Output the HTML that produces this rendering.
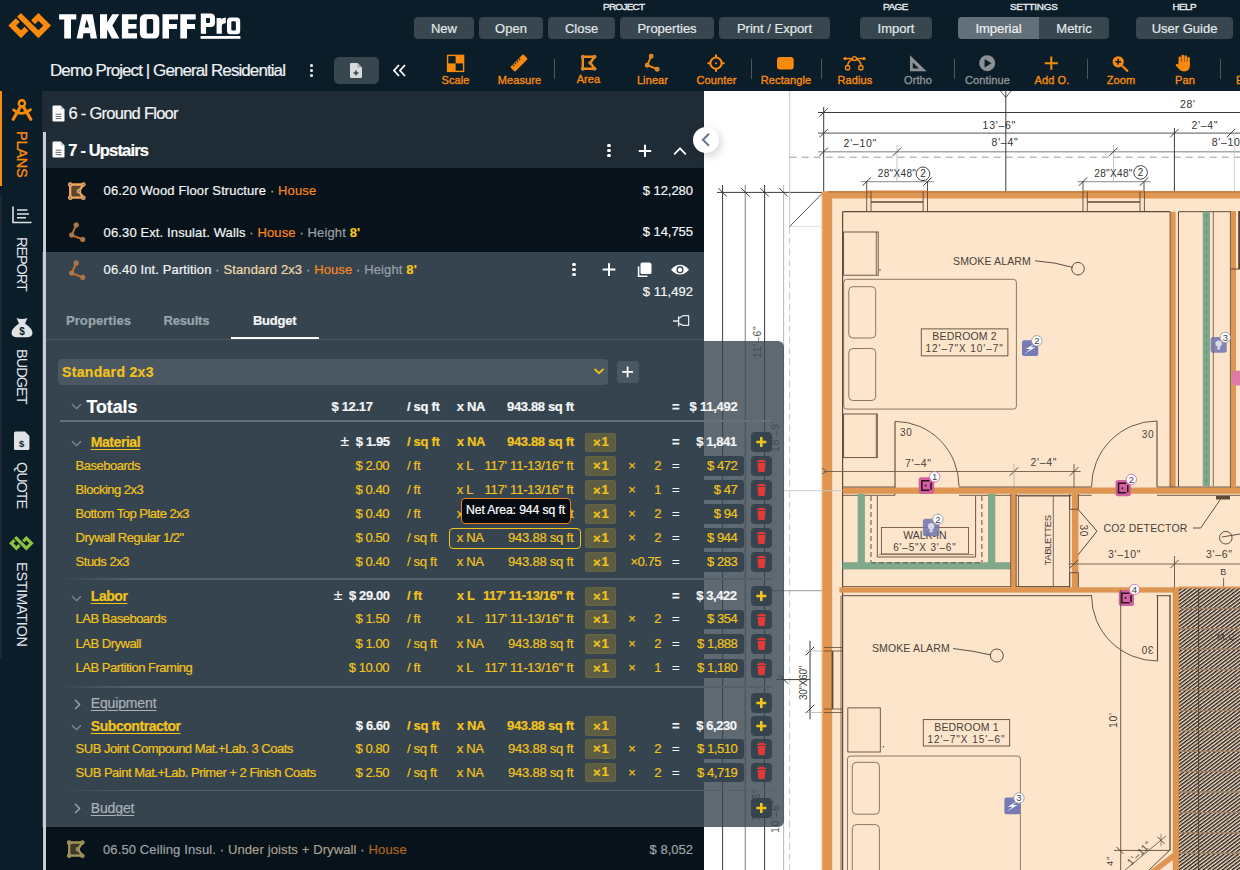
<!DOCTYPE html><html><head><meta charset="utf-8"><style>
*{box-sizing:border-box;margin:0;padding:0}
html,body{width:1240px;height:870px;overflow:hidden;background:#0b1d29;font-family:"Liberation Sans",sans-serif;color:#fff;position:relative}
.a{position:absolute}
.t{position:absolute;line-height:1;white-space:nowrap;-webkit-text-stroke:0.2px currentColor}
.btn{position:absolute;top:17px;height:22px;background:#37464f;border-radius:4px}
.sep{position:absolute;top:59px;width:1px;height:20px;background:#4a5760}
</style></head><body><svg class="a" style="left:704px;top:91px" width="536" height="779" viewBox="704 91 536 779" font-family="Liberation Sans"><rect x="704" y="91" width="536" height="779" fill="#fff"/>
<line x1="722.6" y1="185" x2="722.6" y2="870" stroke="#3b3b3b" stroke-width="1" />
<line x1="718.4" y1="188.20000000000002" x2="726.8000000000001" y2="196.6" stroke="#3b3b3b" stroke-width="1" />
<line x1="745.3" y1="185" x2="745.3" y2="870" stroke="#9d9d9d" stroke-width="1.3" />
<line x1="741.0999999999999" y1="188.20000000000002" x2="749.5" y2="196.6" stroke="#3b3b3b" stroke-width="1" />
<line x1="764.6" y1="185" x2="764.6" y2="870" stroke="#3b3b3b" stroke-width="1" />
<line x1="760.4" y1="188.20000000000002" x2="768.8000000000001" y2="196.6" stroke="#3b3b3b" stroke-width="1" />
<line x1="783.6" y1="185" x2="783.6" y2="870" stroke="#b0b0b0" stroke-width="0.9" />
<line x1="779.4" y1="188.20000000000002" x2="787.8000000000001" y2="196.6" stroke="#3b3b3b" stroke-width="1" />
<line x1="717" y1="192.4" x2="822.6" y2="192.4" stroke="#3b3b3b" stroke-width="1" />
<line x1="789.7" y1="91" x2="789.7" y2="226.5" stroke="#c8c8c8" stroke-width="1" />
<line x1="789.7" y1="226.5" x2="789.7" y2="870" stroke="#c8c8c8" stroke-width="1" stroke-dasharray="7 4"/>
<line x1="789.7" y1="226.5" x2="822.6" y2="193" stroke="#3b3b3b" stroke-width="0.9" />
<line x1="789.7" y1="226.4" x2="822.6" y2="226.4" stroke="#d8d8d8" stroke-width="0.8" />
<text x="0" y="0" font-size="10.5" fill="#555" letter-spacing="0.7" transform="translate(760.8 358) rotate(-90)">11'–6"</text>
<text x="0" y="0" font-size="10.5" fill="#777" letter-spacing="0.7" transform="translate(779 452) rotate(-90)">18'–9"</text>
<text x="0" y="0" font-size="10.5" fill="#666" letter-spacing="0.7" transform="translate(759.5 821) rotate(-90)">11'–6"</text>
<text x="0" y="0" font-size="10.5" fill="#555" letter-spacing="0.7" transform="translate(778.5 833) rotate(-90)">10'–6"</text>
<line x1="769" y1="590.7" x2="822.6" y2="590.7" stroke="#9a9a9a" stroke-width="1" />
<line x1="776.5" y1="679.6" x2="810" y2="679.6" stroke="#3b3b3b" stroke-width="1" />
<line x1="779.6999999999999" y1="675.4" x2="788.1" y2="683.8000000000001" stroke="#3b3b3b" stroke-width="1" />
<line x1="810" y1="640.8" x2="810" y2="719.4" stroke="#3b3b3b" stroke-width="1" />
<line x1="805.8" y1="655.2" x2="814.2" y2="646.8" stroke="#3b3b3b" stroke-width="1" />
<line x1="805.8" y1="713.2" x2="814.2" y2="704.8" stroke="#3b3b3b" stroke-width="1" />
<line x1="804.8" y1="651" x2="822.6" y2="651" stroke="#b0b0b0" stroke-width="0.8" />
<line x1="804.8" y1="712.5" x2="822.6" y2="712.5" stroke="#b0b0b0" stroke-width="0.8" />
<text x="0" y="0" font-size="10" fill="#444" letter-spacing="-0.3" transform="translate(807 700) rotate(-90)">30"X60"</text>
<line x1="818" y1="112.5" x2="1240" y2="112.5" stroke="#3b3b3b" stroke-width="1" />
<line x1="818" y1="133.1" x2="1240" y2="133.1" stroke="#555" stroke-width="1" />
<line x1="818" y1="151.7" x2="1240" y2="151.7" stroke="#a8a8a8" stroke-width="1.6" />
<line x1="789.7" y1="157.2" x2="1240" y2="157.2" stroke="#9a9a9a" stroke-width="1" stroke-dasharray="7 5"/>
<line x1="823.7" y1="107" x2="823.7" y2="193" stroke="#3b3b3b" stroke-width="1" />
<line x1="819.5" y1="116.7" x2="827.9000000000001" y2="108.3" stroke="#3b3b3b" stroke-width="1" />
<line x1="819.5" y1="137.29999999999998" x2="827.9000000000001" y2="128.9" stroke="#3b3b3b" stroke-width="1" />
<line x1="819.5" y1="155.89999999999998" x2="827.9000000000001" y2="147.5" stroke="#3b3b3b" stroke-width="1" />
<line x1="1005.8" y1="91" x2="1005.8" y2="191" stroke="#3b3b3b" stroke-width="1" />
<path d="M1000.5 91 L1005.8 97.5 L1011.1 91" fill="none" stroke="#444" stroke-width="0.9"/>
<line x1="1174.4" y1="128" x2="1174.4" y2="216" stroke="#3b3b3b" stroke-width="1" />
<line x1="1170.2" y1="137.29999999999998" x2="1178.6000000000001" y2="128.9" stroke="#3b3b3b" stroke-width="1" />
<line x1="1226.8" y1="137.29999999999998" x2="1235.2" y2="128.9" stroke="#3b3b3b" stroke-width="1" />
<line x1="897" y1="145" x2="897" y2="181.6" stroke="#b8b8b8" stroke-width="0.8" />
<line x1="892.8" y1="155.89999999999998" x2="901.2" y2="147.5" stroke="#3b3b3b" stroke-width="1" />
<line x1="1113.5" y1="145" x2="1113.5" y2="181.6" stroke="#b8b8b8" stroke-width="0.8" />
<line x1="1109.3" y1="155.89999999999998" x2="1117.7" y2="147.5" stroke="#3b3b3b" stroke-width="1" />
<line x1="1234.3" y1="133" x2="1234.3" y2="211" stroke="#c8c8c8" stroke-width="0.8" />
<text x="1180" y="107.65" font-size="10.5" fill="#333" text-anchor="start" letter-spacing="0.7">28'</text>
<text x="982.6" y="128.65" font-size="10.5" fill="#333" text-anchor="start" letter-spacing="0.7">13'–6"</text>
<text x="1191.4" y="128.65" font-size="10.5" fill="#333" text-anchor="start" letter-spacing="0.7">2'–4"</text>
<text x="843.6" y="146.65" font-size="10.5" fill="#333" text-anchor="start" letter-spacing="0.7">2'–10"</text>
<text x="991.6" y="146.05" font-size="10.5" fill="#333" text-anchor="start" letter-spacing="0.7">8'–4"</text>
<text x="1211.7" y="146.05" font-size="10.5" fill="#333" text-anchor="start" letter-spacing="0.7">8'–10"</text>
<text x="877.8" y="176.70" font-size="10" fill="#333" text-anchor="start" letter-spacing="0.35">28"X48"</text>
<circle cx="923" cy="173.8" r="6.8" fill="none" stroke="#333" stroke-width="0.9"/>
<text x="923" y="177.4" font-size="10" fill="#333" text-anchor="middle">2</text>
<text x="1094.3" y="176.70" font-size="10" fill="#333" text-anchor="start" letter-spacing="0.35">28"X48"</text>
<circle cx="1140.6" cy="172.4" r="6.8" fill="none" stroke="#333" stroke-width="0.9"/>
<text x="1140.6" y="176.0" font-size="10" fill="#333" text-anchor="middle">2</text>
<line x1="860.8" y1="181.6" x2="933.8" y2="181.6" stroke="#a0a0a0" stroke-width="1.4" />
<line x1="862.5" y1="185.79999999999998" x2="870.9000000000001" y2="177.4" stroke="#3b3b3b" stroke-width="1" />
<line x1="923.3" y1="185.79999999999998" x2="931.7" y2="177.4" stroke="#3b3b3b" stroke-width="1" />
<line x1="1077.4" y1="181.6" x2="1150.7" y2="181.6" stroke="#a0a0a0" stroke-width="1.4" />
<line x1="1078.8" y1="185.79999999999998" x2="1087.2" y2="177.4" stroke="#3b3b3b" stroke-width="1" />
<line x1="1139.8" y1="185.79999999999998" x2="1148.2" y2="177.4" stroke="#3b3b3b" stroke-width="1" />
<line x1="866.7" y1="181.6" x2="866.7" y2="191" stroke="#3b3b3b" stroke-width="0.9" />
<line x1="927.5" y1="181.6" x2="927.5" y2="191" stroke="#3b3b3b" stroke-width="0.9" />
<line x1="1083" y1="181.6" x2="1083" y2="191" stroke="#3b3b3b" stroke-width="0.9" />
<line x1="1144" y1="181.6" x2="1144" y2="191" stroke="#3b3b3b" stroke-width="0.9" />
<rect x="822.6" y="191.5" width="417.4" height="678.5" fill="#fde5cc"/>
<rect x="822.6" y="191.5" width="417.4" height="7.0" fill="#de9652"/>
<rect x="822.6" y="191.5" width="9.600000000000023" height="678.5" fill="#de9652"/>
<line x1="828" y1="191.8" x2="1240" y2="191.8" stroke="#b8722c" stroke-width="1.2" />
<line x1="822.3" y1="192" x2="822.3" y2="870" stroke="#f4a65a" stroke-width="1.3" />
<rect x="866.7" y="198.7" width="60.799999999999955" height="13.0" fill="#fde5cc"/>
<line x1="866.7" y1="191" x2="866.7" y2="211.7" stroke="#5e4836" stroke-width="0.9" />
<line x1="871.0" y1="191" x2="871.0" y2="211.7" stroke="#5e4836" stroke-width="0.9" />
<line x1="923.1" y1="191" x2="923.1" y2="211.7" stroke="#5e4836" stroke-width="0.9" />
<line x1="927.5" y1="191" x2="927.5" y2="211.7" stroke="#5e4836" stroke-width="0.9" />
<line x1="871.0" y1="202" x2="923.1" y2="202" stroke="#5e4836" stroke-width="1.6" />
<rect x="1083" y="198.7" width="61.40000000000009" height="13.0" fill="#fde5cc"/>
<line x1="1083" y1="191" x2="1083" y2="211.7" stroke="#5e4836" stroke-width="0.9" />
<line x1="1087.3" y1="191" x2="1087.3" y2="211.7" stroke="#5e4836" stroke-width="0.9" />
<line x1="1140.0" y1="191" x2="1140.0" y2="211.7" stroke="#5e4836" stroke-width="0.9" />
<line x1="1144.4" y1="191" x2="1144.4" y2="211.7" stroke="#5e4836" stroke-width="0.9" />
<line x1="1087.3" y1="202" x2="1140.0" y2="202" stroke="#5e4836" stroke-width="1.6" />
<line x1="866.7" y1="191" x2="927.5" y2="191" stroke="#cf8137" stroke-width="1" />
<line x1="1083" y1="191" x2="1144.4" y2="191" stroke="#cf8137" stroke-width="1" />
<rect x="832.5" y="647" width="10.100000000000023" height="66" fill="#fde5cc"/>
<line x1="823.7" y1="647.5" x2="842.6" y2="647.5" stroke="#5e4836" stroke-width="0.8" />
<line x1="823.7" y1="651" x2="842.6" y2="651" stroke="#5e4836" stroke-width="0.8" />
<line x1="823.7" y1="709" x2="842.6" y2="709" stroke="#5e4836" stroke-width="0.8" />
<line x1="823.7" y1="712.5" x2="842.6" y2="712.5" stroke="#5e4836" stroke-width="0.8" />
<line x1="832.5" y1="651" x2="832.5" y2="709" stroke="#5e4836" stroke-width="1.8" />
<line x1="842.6" y1="211.7" x2="1170" y2="211.7" stroke="#5e4836" stroke-width="1.2" />
<line x1="842.6" y1="211.7" x2="842.6" y2="870" stroke="#5e4836" stroke-width="1.2" />
<rect x="1170" y="211.7" width="5.599999999999909" height="275.8" fill="#de9652"/>
<line x1="1170" y1="211.7" x2="1170" y2="487" stroke="#5e4836" stroke-width="0.8" />
<rect x="843.6" y="232" width="34.60000000000002" height="43.19999999999999" rx="0" fill="none" stroke="#5e4836" stroke-width="0.9"/>
<line x1="876.3" y1="232" x2="876.3" y2="275.2" stroke="#5e4836" stroke-width="0.8" />
<circle cx="880" cy="270" r="0.8" fill="#5e4836"/>
<rect x="843.7" y="279.3" width="172.69999999999993" height="129.8" rx="3" fill="none" stroke="#6e5a48" stroke-width="0.8"/>
<rect x="848.8" y="286.7" width="26.90000000000009" height="51.30000000000001" rx="4" fill="none" stroke="#6e5a48" stroke-width="0.8"/>
<rect x="848.8" y="348.5" width="26.90000000000009" height="52.0" rx="4" fill="none" stroke="#6e5a48" stroke-width="0.8"/>
<rect x="843.6" y="414" width="33.69999999999993" height="43.60000000000002" rx="0" fill="none" stroke="#5e4836" stroke-width="0.9"/>
<line x1="876.3" y1="414" x2="876.3" y2="457.6" stroke="#5e4836" stroke-width="0.8" />
<rect x="921.3" y="328.9" width="86.60000000000002" height="27.0" rx="0" fill="none" stroke="#5e4836" stroke-width="0.9"/>
<text x="964.6" y="340.44" font-size="10.5" fill="#4a4038" text-anchor="middle" letter-spacing="0.17">BEDROOM 2</text>
<text x="964.6" y="352.40" font-size="10" fill="#4a4038" text-anchor="middle" letter-spacing="0.95">12'–7"X  10'–7"</text>
<text x="953" y="265.14" font-size="10.5" fill="#4a4038" text-anchor="start" letter-spacing="0.14">SMOKE ALARM</text>
<path d="M1035 260.8 Q1055 262 1073 267.5" fill="none" stroke="#4a4038" stroke-width="0.9"/>
<circle cx="1078" cy="268.7" r="6.3" fill="none" stroke="#4a4038" stroke-width="0.9"/>
<rect x="1022" y="340.3" width="16.299999999999955" height="15.699999999999989" rx="2" fill="#777bb4"/>
<path d="M1036.15 342.65 L1025.65 348.95 H1030.3500000000001 L1024.15 354.15 L1035.15 347.34999999999997 H1030.45 Z" fill="#fff"/>
<circle cx="1036.8" cy="340.8" r="5.2" fill="#fff" stroke="#9a9aa6" stroke-width="0.9"/>
<text x="1036.8" y="344.2" font-size="9.5" fill="#444" text-anchor="middle">2</text>
<path d="M895 421.4 A64 65 0 0 1 959 486.4" fill="none" stroke="#5e4836" stroke-width="0.9"/>
<line x1="895" y1="421.4" x2="895" y2="495" stroke="#5e4836" stroke-width="1.1" />
<text x="900" y="435.50" font-size="10" fill="#4a4038" text-anchor="start" letter-spacing="0.7">30</text>
<path d="M1091.5 487 A65.5 66 0 0 1 1157 421" fill="none" stroke="#5e4836" stroke-width="0.9"/>
<line x1="1157" y1="421" x2="1157" y2="487" stroke="#5e4836" stroke-width="1.1" />
<text x="1141.7" y="437.60" font-size="10" fill="#4a4038" text-anchor="start" letter-spacing="0.7">30</text>
<line x1="824" y1="471.5" x2="1080.6" y2="471.5" stroke="#6e5a48" stroke-width="0.9" />
<line x1="1009.8" y1="475.7" x2="1018.2" y2="467.3" stroke="#5e4836" stroke-width="1" />
<line x1="1069.8" y1="475.7" x2="1078.2" y2="467.3" stroke="#5e4836" stroke-width="1" />
<path d="M822 468 L827 471.5 L822 474" fill="none" stroke="#555" stroke-width="0.8"/>
<line x1="1074" y1="464" x2="1074" y2="494" stroke="#5e4836" stroke-width="0.8" />
<line x1="1014" y1="464" x2="1014" y2="494" stroke="#b09a88" stroke-width="0.6" />
<text x="905" y="466.94" font-size="10.5" fill="#4a4038" text-anchor="start" letter-spacing="0.7">7'–4"</text>
<text x="1030.4" y="466.25" font-size="10.5" fill="#4a4038" text-anchor="start" letter-spacing="0.7">2'–4"</text>
<line x1="783" y1="490.7" x2="843" y2="490.7" stroke="#c8c8c8" stroke-width="0.9" />
<rect x="843" y="487.5" width="397" height="6.300000000000011" fill="#de9652"/>
<line x1="843" y1="487" x2="895" y2="487" stroke="#5e4836" stroke-width="0.9" />
<line x1="843" y1="495.3" x2="895" y2="495.3" stroke="#5e4836" stroke-width="0.9" />
<line x1="959" y1="487" x2="1091.5" y2="487" stroke="#5e4836" stroke-width="0.9" />
<line x1="959" y1="495.3" x2="1091.5" y2="495.3" stroke="#5e4836" stroke-width="0.9" />
<line x1="1157" y1="487" x2="1240" y2="487" stroke="#5e4836" stroke-width="0.9" />
<line x1="1157" y1="495.3" x2="1240" y2="495.3" stroke="#5e4836" stroke-width="0.9" />
<rect x="918.7" y="477.3" width="15.5" height="16.5" rx="2.5" fill="#cf5a9c" opacity="0.95"/>
<path d="M929.45 480.75 H921.85 V490.35 H929.45 M931.0500000000001 482.55 V489.75" fill="none" stroke="#2a1020" stroke-width="1.5"/><circle cx="925.6500000000001" cy="485.55" r="0.9" fill="#2a1020"/>
<circle cx="934.7" cy="476.8" r="5.2" fill="#fff" stroke="#d070a8" stroke-width="0.9"/>
<text x="934.7" y="480.2" font-size="9.5" fill="#444" text-anchor="middle">1</text>
<rect x="1115.5" y="479.9" width="15.299999999999955" height="16.30000000000001" rx="2.5" fill="#cf5a9c" opacity="0.95"/>
<path d="M1126.15 483.24999999999994 H1118.5500000000002 V492.84999999999997 H1126.15 M1127.75 485.04999999999995 V492.24999999999994" fill="none" stroke="#2a1020" stroke-width="1.5"/><circle cx="1122.3500000000001" cy="488.04999999999995" r="0.9" fill="#2a1020"/>
<circle cx="1131.3" cy="479.4" r="5.2" fill="#fff" stroke="#d070a8" stroke-width="0.9"/>
<text x="1131.3" y="482.79999999999995" font-size="9.5" fill="#444" text-anchor="middle">2</text>
<rect x="857.6" y="493.8" width="7.2999999999999545" height="71.49999999999994" fill="#80a98b"/>
<rect x="988" y="493.8" width="7.2999999999999545" height="71.49999999999994" fill="#80a98b"/>
<rect x="842.6" y="562.2" width="168.10000000000002" height="7.199999999999932" fill="#80a98b"/>
<line x1="871" y1="496" x2="871" y2="562" stroke="#4a4038" stroke-width="0.9" stroke-dasharray="5 3"/>
<line x1="981.9" y1="496" x2="981.9" y2="562" stroke="#4a4038" stroke-width="0.9" stroke-dasharray="5 3"/>
<line x1="871" y1="562.8" x2="981.9" y2="562.8" stroke="#4a4038" stroke-width="0.8" stroke-dasharray="5 3"/>
<line x1="877.3" y1="496" x2="877.3" y2="557" stroke="#5e4836" stroke-width="0.9" />
<line x1="975.6" y1="496" x2="975.6" y2="557" stroke="#5e4836" stroke-width="0.9" />
<line x1="877.3" y1="557" x2="975.6" y2="557" stroke="#5e4836" stroke-width="0.9" />
<line x1="879" y1="554.6" x2="974" y2="554.6" stroke="#5e4836" stroke-width="0.6" />
<rect x="881.4" y="527.6" width="87.0" height="26.299999999999955" rx="0" fill="none" stroke="#5e4836" stroke-width="0.8"/>
<text x="924.9" y="539.25" font-size="10.5" fill="#4a4038" text-anchor="middle" letter-spacing="0">WALK-IN</text>
<text x="924.9" y="551.20" font-size="10" fill="#4a4038" text-anchor="middle" letter-spacing="0.8">6'–5"X  3'–6"</text>
<rect x="922.9" y="518.7" width="16.5" height="17.59999999999991" rx="2.5" fill="#6f74ad" opacity="0.85"/>
<circle cx="931.15" cy="526.3" r="3.2" fill="#e8e8f0" opacity="0.85"/><rect x="929.75" y="529.3" width="2.8" height="3" fill="#e8e8f0" opacity="0.85"/>
<circle cx="937.9" cy="519.2" r="5.2" fill="#fff" stroke="#9a9aa6" stroke-width="0.9"/>
<text x="937.9" y="522.6" font-size="9.5" fill="#444" text-anchor="middle">2</text>
<rect x="1010.7" y="494" width="5.5" height="94" fill="#de9652"/>
<line x1="1010.7" y1="494" x2="1010.7" y2="588" stroke="#5e4836" stroke-width="0.8" />
<line x1="1016.2" y1="494" x2="1016.2" y2="588" stroke="#5e4836" stroke-width="0.8" />
<rect x="1018.4" y="496" width="51.30000000000007" height="91" rx="0" fill="none" stroke="#5e4836" stroke-width="0.9"/>
<line x1="1053.3" y1="496" x2="1053.3" y2="587" stroke="#5e4836" stroke-width="0.8" />
<text x="0" y="0" font-size="9.5" fill="#4a4038" letter-spacing="-0.4" transform="translate(1051 565.5) rotate(-90)">TABLETTES</text>
<rect x="1071.9" y="494" width="6.5" height="94" fill="#de9652"/>
<line x1="1069.7" y1="494" x2="1069.7" y2="509.3" stroke="#5e4836" stroke-width="0.9" />
<line x1="1069.7" y1="509.3" x2="1078.4" y2="509.3" stroke="#5e4836" stroke-width="0.9" />
<line x1="1069.7" y1="572.7" x2="1078.4" y2="572.7" stroke="#5e4836" stroke-width="0.9" />
<line x1="1069.7" y1="572.7" x2="1069.7" y2="588" stroke="#5e4836" stroke-width="0.9" />
<line x1="1078.4" y1="494" x2="1078.4" y2="509.3" stroke="#5e4836" stroke-width="0.9" />
<line x1="1078.4" y1="572.7" x2="1078.4" y2="588" stroke="#5e4836" stroke-width="0.9" />
<path d="M1078 509.3 L1097 531.2 L1078 555" fill="none" stroke="#5e4836" stroke-width="1"/>
<text x="0" y="0" font-size="10" fill="#4a4038" letter-spacing="0.7" transform="translate(1080 524.6) rotate(90)">30</text>
<text x="1103.5" y="531.85" font-size="10.5" fill="#4a4038" text-anchor="start" letter-spacing="0.16">CO2 DETECTOR</text>
<rect x="1216" y="496" width="14" height="3.5" fill="#5e4836"/>
<path d="M1193 528 H1200.7 L1220.3 499.5" fill="none" stroke="#4a4038" stroke-width="0.9"/>
<circle cx="1225.8" cy="537.7" r="6.3" fill="none" stroke="#4a4038" stroke-width="0.9"/>
<line x1="1222" y1="537" x2="1240" y2="534" stroke="#4a4038" stroke-width="0.9" />
<text x="1108" y="558.04" font-size="10.5" fill="#4a4038" text-anchor="start" letter-spacing="0.7">3'–10"</text>
<text x="1206" y="558.04" font-size="10.5" fill="#4a4038" text-anchor="start" letter-spacing="0.7">3'–6"</text>
<line x1="1068.6" y1="564" x2="1240" y2="564" stroke="#6e5a48" stroke-width="0.9" />
<line x1="1069.8" y1="568.2" x2="1078.2" y2="559.8" stroke="#5e4836" stroke-width="1" />
<line x1="1170.3" y1="568.2" x2="1178.7" y2="559.8" stroke="#5e4836" stroke-width="1" />
<text x="1223.6" y="574.71" font-size="9" fill="#4a4038" text-anchor="middle" letter-spacing="0.7">B</text>
<line x1="1223.6" y1="578" x2="1223.6" y2="625" stroke="#4a4038" stroke-width="0.8" />
<line x1="1174.5" y1="556" x2="1174.5" y2="600" stroke="#4a4038" stroke-width="0.8" />
<line x1="1178.5" y1="211.7" x2="1178.5" y2="487" stroke="#5e4836" stroke-width="1" />
<line x1="1178.5" y1="211.7" x2="1230.2" y2="211.7" stroke="#5e4836" stroke-width="1" />
<rect x="1202.7" y="211.7" width="7.2999999999999545" height="274.3" fill="#80a98b"/>
<line x1="1206.4" y1="214" x2="1206.4" y2="486" stroke="#5f8a6a" stroke-width="0.9" stroke-dasharray="5 3"/>
<line x1="1213.3" y1="211.7" x2="1213.3" y2="486" stroke="#5e4836" stroke-width="0.8" />
<rect x="1230.4" y="211" width="5.599999999999909" height="276.5" fill="#de9652"/>
<line x1="1230.4" y1="211" x2="1230.4" y2="487.5" stroke="#5e4836" stroke-width="0.8" />
<rect x="1238.2" y="211" width="1.7999999999999545" height="58" fill="#5a4030"/>
<line x1="1230.2" y1="269" x2="1240" y2="269" stroke="#5e4836" stroke-width="1" />
<rect x="1210.6" y="336.9" width="16.200000000000045" height="15.800000000000011" rx="2.5" fill="#6f74ad" opacity="0.85"/>
<circle cx="1218.6999999999998" cy="343.59999999999997" r="3.2" fill="#e8e8f0" opacity="0.85"/><rect x="1217.2999999999997" y="346.59999999999997" width="2.8" height="3" fill="#e8e8f0" opacity="0.85"/>
<circle cx="1225.3" cy="337.4" r="5.2" fill="#fff" stroke="#9a9aa6" stroke-width="0.9"/>
<text x="1225.3" y="340.79999999999995" font-size="9.5" fill="#444" text-anchor="middle">3</text>
<rect x="1232" y="370.8" width="10" height="14.6" rx="2" fill="#e07aa6"/>
<rect x="839.4" y="587.3" width="335.1" height="5.300000000000068" fill="#de9652"/>
<line x1="842.6" y1="595.7" x2="1092" y2="595.7" stroke="#5e4836" stroke-width="1" />
<line x1="1156.4" y1="595.7" x2="1171" y2="595.7" stroke="#5e4836" stroke-width="1" />
<line x1="843" y1="586.5" x2="1010.7" y2="586.5" stroke="#5e4836" stroke-width="0.8" />
<line x1="1016.2" y1="586.5" x2="1069.7" y2="586.5" stroke="#5e4836" stroke-width="0.8" />
<rect x="1118.8" y="590" width="15.200000000000045" height="16" rx="2.5" fill="#cf5a9c" opacity="0.95"/>
<path d="M1129.4 593.2 H1121.8000000000002 V602.8 H1129.4 M1131.0 595.0 V602.2" fill="none" stroke="#2a1020" stroke-width="1.5"/><circle cx="1125.6000000000001" cy="598.0" r="0.9" fill="#2a1020"/>
<circle cx="1134.5" cy="589.5" r="5.2" fill="#fff" stroke="#d070a8" stroke-width="0.9"/>
<text x="1134.5" y="592.9" font-size="9.5" fill="#444" text-anchor="middle">4</text>
<line x1="841" y1="595.7" x2="841" y2="870" stroke="#5e4836" stroke-width="0.8" />
<text x="871.9" y="652.25" font-size="10.5" fill="#4a4038" text-anchor="start" letter-spacing="0.14">SMOKE ALARM</text>
<path d="M953 648.5 Q975 651 991 655" fill="none" stroke="#4a4038" stroke-width="0.9"/>
<circle cx="996.8" cy="655.5" r="6.5" fill="none" stroke="#4a4038" stroke-width="0.9"/>
<rect x="847.8" y="707.9" width="32.5" height="44.10000000000002" rx="0" fill="none" stroke="#5e4836" stroke-width="0.9"/>
<circle cx="883.4" cy="746.7" r="0.8" fill="#5e4836"/>
<rect x="923.3" y="719.6" width="86.40000000000009" height="26.399999999999977" rx="0" fill="none" stroke="#5e4836" stroke-width="0.9"/>
<text x="966.5" y="731.04" font-size="10.5" fill="#4a4038" text-anchor="middle" letter-spacing="0.17">BEDROOM 1</text>
<text x="966.5" y="742.90" font-size="10" fill="#4a4038" text-anchor="middle" letter-spacing="0.95">12'–7"X  15'–6"</text>
<rect x="847.5" y="756" width="172.89999999999998" height="124" rx="3" fill="none" stroke="#6e5a48" stroke-width="0.8"/>
<rect x="852.3" y="762.3" width="27.100000000000023" height="51.90000000000009" rx="4" fill="none" stroke="#6e5a48" stroke-width="0.8"/>
<rect x="852.3" y="824.6" width="27.100000000000023" height="55.39999999999998" rx="4" fill="none" stroke="#6e5a48" stroke-width="0.8"/>
<rect x="1004.4" y="797.5" width="16.0" height="16.700000000000045" rx="2" fill="#777bb4"/>
<path d="M1018.4 800.35 L1007.9 806.65 H1012.6 L1006.4 811.85 L1017.4 805.0500000000001 H1012.6999999999999 Z" fill="#fff"/>
<circle cx="1018.9" cy="798.0" r="5.2" fill="#fff" stroke="#9a9aa6" stroke-width="0.9"/>
<text x="1018.9" y="801.4" font-size="9.5" fill="#444" text-anchor="middle">3</text>
<path d="M1091.5 595.5 A66 65.5 0 0 0 1157.5 661" fill="none" stroke="#5e4836" stroke-width="0.9"/>
<line x1="1157.5" y1="595.7" x2="1157.5" y2="661" stroke="#5e4836" stroke-width="1.1" />
<text x="0" y="0" font-size="10" fill="#4a4038" letter-spacing="0.7" transform="translate(1153.5 646.4) rotate(180)">30</text>
<line x1="1120.7" y1="590" x2="1120.7" y2="870" stroke="#5e4836" stroke-width="0.9" />
<text x="0" y="0" font-size="10.5" fill="#4a4038" letter-spacing="0.7" transform="translate(1116.9 728) rotate(-90)">10'</text>
<line x1="1170" y1="595.7" x2="1170" y2="850.4" stroke="#5e4836" stroke-width="1.3" />
<rect x="1173.3" y="587.3" width="5.7000000000000455" height="282.70000000000005" fill="#de9652"/>
<line x1="1173.3" y1="587.3" x2="1173.3" y2="870" stroke="#cf8137" stroke-width="0.8" />
<line x1="1179" y1="587.3" x2="1179" y2="870" stroke="#cf8137" stroke-width="0.8" />
<line x1="1114" y1="850.4" x2="1169.5" y2="850.4" stroke="#5e4836" stroke-width="0.9" />
<line x1="1116.5" y1="846.9" x2="1123.5" y2="853.9" stroke="#5e4836" stroke-width="1" />
<line x1="1125" y1="870" x2="1166" y2="836" stroke="#5e4836" stroke-width="0.8" />
<line x1="1157.5" y1="836.8" x2="1164.5" y2="843.8" stroke="#5e4836" stroke-width="1" />
<line x1="1161" y1="834" x2="1161" y2="846" stroke="#5e4836" stroke-width="0.6" />
<path d="M1152.5 872 L1175.5 854.5" stroke="#de9652" stroke-width="5.5"/>
<line x1="1149" y1="870" x2="1169.5" y2="850.4" stroke="#5e4836" stroke-width="1" />
<text x="0" y="0" font-size="9.5" fill="#4a4038" letter-spacing="0.7" transform="translate(1131 866) rotate(-45)">1'–11"</text>
<text x="0" y="0" font-size="9.5" fill="#4a4038" letter-spacing="0.7" transform="translate(1113 866) rotate(-90)">4"</text>
<defs><pattern id="hatch" patternUnits="userSpaceOnUse" width="2.9" height="2.9" patternTransform="rotate(53)"><rect width="2.9" height="2.9" fill="#fde5cc"/><rect x="0" y="0" width="1.45" height="2.9" fill="#201c1a"/></pattern></defs>
<rect x="1179" y="587.5" width="61" height="283" fill="url(#hatch)"/>
<line x1="1179" y1="608.4" x2="1240" y2="608.4" stroke="#a08468" stroke-width="1.5" />
<line x1="1179" y1="628.8" x2="1240" y2="628.8" stroke="#a08468" stroke-width="1.5" />
<line x1="1179" y1="649.1999999999999" x2="1240" y2="649.1999999999999" stroke="#a08468" stroke-width="1.5" />
<line x1="1179" y1="669.6" x2="1240" y2="669.6" stroke="#a08468" stroke-width="1.5" />
<line x1="1179" y1="690.0" x2="1240" y2="690.0" stroke="#a08468" stroke-width="1.5" />
<line x1="1179" y1="710.4" x2="1240" y2="710.4" stroke="#a08468" stroke-width="1.5" />
<line x1="1179" y1="730.8" x2="1240" y2="730.8" stroke="#a08468" stroke-width="1.5" />
<line x1="1179" y1="751.1999999999999" x2="1240" y2="751.1999999999999" stroke="#a08468" stroke-width="1.5" />
<line x1="1179" y1="771.5999999999999" x2="1240" y2="771.5999999999999" stroke="#a08468" stroke-width="1.5" />
<line x1="1179" y1="792.0" x2="1240" y2="792.0" stroke="#a08468" stroke-width="1.5" />
<line x1="1179" y1="812.4" x2="1240" y2="812.4" stroke="#a08468" stroke-width="1.5" />
<line x1="1179" y1="832.8" x2="1240" y2="832.8" stroke="#a08468" stroke-width="1.5" />
<line x1="1179" y1="853.1999999999999" x2="1240" y2="853.1999999999999" stroke="#a08468" stroke-width="1.5" />
<line x1="1179" y1="873.5999999999999" x2="1240" y2="873.5999999999999" stroke="#a08468" stroke-width="1.5" />
<line x1="1198.6" y1="587.5" x2="1198.6" y2="870" stroke="#5a4030" stroke-width="1" />
<line x1="1179" y1="587.5" x2="1240" y2="587.5" stroke="#de9652" stroke-width="2" />
<text x="1217" y="640.21" font-size="9" fill="#4a4038" text-anchor="start" letter-spacing="0.7">M.C</text></svg><div class="a" style="left:704px;top:341px;width:80px;height:486px;background:rgba(54,68,79,0.8);border-radius:0 6px 6px 0"></div>
<div class="a" style="left:0;top:0;width:1240px;height:91px;background:#0b1d29"></div>
<svg class="a" style="left:4px;top:8px" width="52" height="36" viewBox="4 8 52 36">
<g fill="none" stroke="#f98a0c" stroke-width="5.5" stroke-linejoin="miter">
<path d="M17.8 20.1 L12.3 25.6 L21 34.3 L26.5 28.8"/>
<path d="M19 14.9 L38.4 34.3 L47.1 25.6 L38.4 16.9 L33.05 22.25"/></g></svg>
<svg class="a" style="left:55px;top:10px" width="190" height="32" viewBox="55 10 190 32"><g fill="#fff" fill-rule="evenodd">
<path d="M59.1 14.2 H76.3 V19.6 H71 V38.5 H64.2 V19.6 H59.1 Z"/>
<path d="M82 14.2 H92.7 L97 38.5 H90.6 L89.9 33.2 H83.5 L82.7 38.5 H76.6 Z M86.8 19.6 L84.6 27.6 H89.1 Z"/>
<path d="M100 14.2 H107.1 V22.6 L112.3 14.2 H119.3 L112.4 25.6 L119.4 38.5 H111.8 L107.1 29.4 V38.5 H100 Z"/>
<path d="M121.9 14.2 H137 V19.4 H128.3 V24.1 H136.4 V28.8 H128.3 V33.3 H137 V38.5 H121.9 Z"/>
<path d="M145.4 14.2 H153.8 Q159.3 14.2 159.3 19.7 V33 Q159.3 38.5 153.8 38.5 H145.4 Q139.9 38.5 139.9 33 V19.7 Q139.9 14.2 145.4 14.2 Z M148.2 19.1 Q146.7 19.1 146.7 20.6 V32 Q146.7 33.5 148.2 33.5 H151.7 Q153.2 33.5 153.2 32 V20.6 Q153.2 19.1 151.7 19.1 Z"/>
<path d="M162.5 14.2 H178 V19.4 H169 V23.9 H177 V29 H169 V38.5 H162.5 Z"/>
<path d="M180.3 14.2 H195.7 V19.4 H187 V23.9 H195 V29 H187 V38.5 H180.3 Z"/>
<path d="M200.8 13.6 H210.5 Q215 13.6 215 18.1 V22.5 Q215 27 210.5 27 H206.1 V33.8 H200.8 Z M206.1 17.9 V22.9 H209 Q210 22.9 210 21.9 V18.9 Q210 17.9 209 17.9 Z"/>
<path d="M216.6 17.9 H221.4 V19.6 Q222.6 17.6 225.8 17.6 V23.3 Q221.8 23.3 221.8 26 V33.8 H216.6 Z"/>
<path d="M230.5 17.5 H236.7 Q240.2 17.5 240.2 21 V30.7 Q240.2 34.2 236.7 34.2 H230.5 Q227 34.2 227 30.7 V21 Q227 17.5 230.5 17.5 Z M232.3 21.3 Q231.3 21.3 231.3 22.3 V29.6 Q231.3 30.6 232.3 30.6 H234.9 Q235.9 30.6 235.9 29.6 V22.3 Q235.9 21.3 234.9 21.3 Z"/>
<rect x="200.6" y="36" width="39.8" height="2.8"/>
</g></svg>
<div class="t" style="top:1.82px;font-size:9.9px;color:#e4e9ec;font-weight:normal;letter-spacing:-0.672px;left:603px;-webkit-text-stroke:0.4px #e4e9ec;">PROJECT</div>
<div class="t" style="top:1.82px;font-size:9.9px;color:#e4e9ec;font-weight:normal;letter-spacing:-0.444px;left:883px;-webkit-text-stroke:0.4px #e4e9ec;">PAGE</div>
<div class="t" style="top:1.82px;font-size:9.9px;color:#e4e9ec;font-weight:normal;letter-spacing:-0.238px;left:1010px;-webkit-text-stroke:0.4px #e4e9ec;">SETTINGS</div>
<div class="t" style="top:1.82px;font-size:9.9px;color:#e4e9ec;font-weight:normal;letter-spacing:-0.616px;left:1172.6px;-webkit-text-stroke:0.4px #e4e9ec;">HELP</div>
<div class="btn" style="left:414px;width:60px"></div>
<div class="t" style="top:21.72px;font-size:13px;color:#e3e8eb;font-weight:normal;left:244.0px;width:400px;text-align:center;">New</div>
<div class="btn" style="left:479px;width:64px"></div>
<div class="t" style="top:21.72px;font-size:13px;color:#e3e8eb;font-weight:normal;left:311.0px;width:400px;text-align:center;">Open</div>
<div class="btn" style="left:548px;width:67px"></div>
<div class="t" style="top:21.72px;font-size:13px;color:#e3e8eb;font-weight:normal;left:381.5px;width:400px;text-align:center;">Close</div>
<div class="btn" style="left:620px;width:94px"></div>
<div class="t" style="top:21.72px;font-size:13px;color:#e3e8eb;font-weight:normal;left:467.0px;width:400px;text-align:center;">Properties</div>
<div class="btn" style="left:719px;width:111px"></div>
<div class="t" style="top:21.72px;font-size:13px;color:#e3e8eb;font-weight:normal;left:574.5px;width:400px;text-align:center;">Print / Export</div>
<div class="btn" style="left:860px;width:72px"></div>
<div class="t" style="top:21.72px;font-size:13px;color:#e3e8eb;font-weight:normal;left:696.0px;width:400px;text-align:center;">Import</div>
<div class="btn" style="left:1136px;width:97px"></div>
<div class="t" style="top:21.72px;font-size:13px;color:#e3e8eb;font-weight:normal;left:984.5px;width:400px;text-align:center;">User Guide</div>
<div class="btn" style="left:958px;width:151px"></div>
<div class="a" style="left:958px;top:17px;width:81px;height:22px;background:#647079;border-radius:4px 0 0 4px"></div>
<div class="t" style="top:21.72px;font-size:13px;color:#eef1f3;font-weight:normal;left:798.5px;width:400px;text-align:center;">Imperial</div>
<div class="t" style="top:21.72px;font-size:13px;color:#e3e8eb;font-weight:normal;left:874px;width:400px;text-align:center;">Metric</div>
<div class="t" style="top:61.88px;font-size:17px;color:#eef1f3;font-weight:normal;letter-spacing:-0.916px;left:50px;">Demo Project | General Residential</div>
<div class="a" style="left:309.5px;top:64.0px;width:3px;height:3px;border-radius:50%;background:#fff"></div>
<div class="a" style="left:309.5px;top:69.0px;width:3px;height:3px;border-radius:50%;background:#fff"></div>
<div class="a" style="left:309.5px;top:74.0px;width:3px;height:3px;border-radius:50%;background:#fff"></div>
<div class="a" style="left:334px;top:57px;width:45px;height:27px;background:#37464f;border-radius:5px"></div>
<svg class="a" style="left:349px;top:62px" width="14" height="17" viewBox="0 0 14 17">
<path d="M2 1 H8.5 L13 5.5 V15 Q13 16 12 16 H2 Q1 16 1 15 V2 Q1 1 2 1Z" fill="#d8dadc"/>
<path d="M8.5 1 V5.5 H13" fill="#a9adb0"/>
<path d="M7 8.5 V13.5 M4.5 11 H9.5" stroke="#37464f" stroke-width="1.6"/></svg>
<svg class="a" style="left:392px;top:64px" width="15" height="13" viewBox="0 0 15 13">
<path d="M7 1 L2 6.5 L7 12 M13 1 L8 6.5 L13 12" fill="none" stroke="#fff" stroke-width="1.8"/></svg>

<svg class="a" style="left:0;top:0" width="1240" height="91" viewBox="0 0 1240 91">
<!-- scale -->
<rect x="447.6" y="55.4" width="16" height="16" fill="none" stroke="#f98a0c" stroke-width="1.4"/>
<rect x="455.6" y="55.4" width="8" height="8" fill="#f98a0c"/><rect x="447.6" y="63.4" width="8" height="8" fill="#f98a0c"/>
<!-- measure ruler -->
<g transform="translate(519,63) rotate(-45)">
<rect x="-9.2" y="-3.4" width="18.4" height="6.8" rx="1.3" fill="#f98a0c"/>
<path d="M-5.5 -3.4 V-1.2 M-2.7 -3.4 V-1.2 M0.1 -3.4 V-1.2 M2.9 -3.4 V-1.2" stroke="#0b1d29" stroke-width="1"/>
</g>
<!-- area -->
<path d="M582.8 56.8 H594.6 L590.3 62.9 L594.6 68.8 H582.8 Z" fill="none" stroke="#f98a0c" stroke-width="2.4" stroke-linejoin="round"/>
<g fill="#8a8f93" stroke="#f98a0c" stroke-width="1"><circle cx="582.8" cy="56.8" r="1.5"/><circle cx="594.6" cy="56.8" r="1.5"/><circle cx="590.3" cy="62.9" r="1.5"/><circle cx="594.6" cy="68.8" r="1.5"/><circle cx="582.8" cy="68.8" r="1.5"/></g>
<!-- linear -->
<path d="M651.2 56.2 L647.2 65.2 L657.2 69.2" fill="none" stroke="#f98a0c" stroke-width="1.8"/>
<g fill="#8a8f93" stroke="#f98a0c" stroke-width="1.3"><circle cx="651.2" cy="56.2" r="1.8"/><circle cx="647.2" cy="65.2" r="1.8"/><circle cx="657.2" cy="69.2" r="1.8"/></g>
<!-- counter -->
<circle cx="716" cy="63.2" r="5.6" fill="none" stroke="#f98a0c" stroke-width="2"/>
<path d="M716 54.6 V58 M716 68.4 V71.8 M707.4 63.2 H710.8 M721.2 63.2 H724.6" stroke="#f98a0c" stroke-width="2"/>
<circle cx="716" cy="63.2" r="1" fill="#f98a0c"/>
<!-- rectangle -->
<rect x="777" y="57" width="16.7" height="12.6" rx="3" fill="#f98a0c"/>
<!-- radius -->
<path d="M845 58.6 H864" stroke="#f98a0c" stroke-width="1.5"/>
<circle cx="845" cy="58.6" r="1.6" fill="#f98a0c"/><circle cx="864" cy="58.6" r="1.6" fill="#f98a0c"/>
<circle cx="854.5" cy="58.6" r="2" fill="#0b1d29" stroke="#f98a0c" stroke-width="1.4"/>
<path d="M852.6 59.5 Q848 61 847.6 65.6 M856.4 59.5 Q861 61 860.9 65.6" fill="none" stroke="#f98a0c" stroke-width="1.5"/>
<rect x="845.6" y="65.8" width="4" height="4" rx="1" fill="none" stroke="#f98a0c" stroke-width="1.4"/>
<rect x="858.9" y="65.8" width="4" height="4" rx="1" fill="none" stroke="#f98a0c" stroke-width="1.4"/>
<!-- ortho -->
<path d="M910 55.3 L926.6 71.2 H910 Z M912.8 62.5 V68.4 H919 Z" fill="#8d9194" fill-rule="evenodd"/>
<!-- continue -->
<circle cx="987.2" cy="63.2" r="8" fill="#8d9194"/><path d="M984.6 59 L991.4 63.2 L984.6 67.4 Z" fill="#0b1d29"/>
<!-- add o -->
<path d="M1051.3 56.6 V69.8 M1044.7 63.2 H1057.9" stroke="#f98a0c" stroke-width="2"/>
<!-- zoom -->
<circle cx="1118.2" cy="61.8" r="5.6" fill="#f98a0c"/>
<path d="M1118.2 58.8 V64.8 M1115.2 61.8 H1121.2" stroke="#0b1d29" stroke-width="1.6"/>
<path d="M1122 65.8 L1128 71.4" stroke="#f98a0c" stroke-width="2.2"/>
<!-- pan -->
<g fill="#f98a0c">
<rect x="1178.6" y="56.6" width="2.5" height="9" rx="1.25"/>
<rect x="1181.5" y="54.8" width="2.5" height="10" rx="1.25"/>
<rect x="1184.4" y="55.2" width="2.5" height="10" rx="1.25"/>
<rect x="1187.3" y="57" width="2.5" height="9" rx="1.25"/>
<path d="M1178.6 62 H1189.8 V66 Q1189.8 71.4 1184 71.4 Q1180.6 71.4 1178.6 68.8 L1175.9 65.6 Q1175.3 64.6 1176.3 64.1 Q1177.4 63.6 1178.6 64.8 Z"/>
</g>
</svg>
<div class="t" style="top:75.24px;font-size:11px;color:#f98a0c;font-weight:normal;left:255.5px;width:400px;text-align:center;-webkit-text-stroke:0.35px #f98a0c;letter-spacing:0.1px;">Scale</div>
<div class="t" style="top:75.24px;font-size:11px;color:#f98a0c;font-weight:normal;left:319.5px;width:400px;text-align:center;-webkit-text-stroke:0.35px #f98a0c;letter-spacing:0.1px;">Measure</div>
<div class="t" style="top:74.24px;font-size:11px;color:#f98a0c;font-weight:normal;left:388.5px;width:400px;text-align:center;-webkit-text-stroke:0.35px #f98a0c;letter-spacing:0.1px;">Area</div>
<div class="t" style="top:75.24px;font-size:11px;color:#f98a0c;font-weight:normal;left:452.5px;width:400px;text-align:center;-webkit-text-stroke:0.35px #f98a0c;letter-spacing:0.1px;">Linear</div>
<div class="t" style="top:75.24px;font-size:11px;color:#f98a0c;font-weight:normal;left:516.5px;width:400px;text-align:center;-webkit-text-stroke:0.35px #f98a0c;letter-spacing:0.1px;">Counter</div>
<div class="t" style="top:75.24px;font-size:11px;color:#f98a0c;font-weight:normal;left:586px;width:400px;text-align:center;-webkit-text-stroke:0.35px #f98a0c;letter-spacing:0.1px;">Rectangle</div>
<div class="t" style="top:75.24px;font-size:11px;color:#f98a0c;font-weight:normal;left:655px;width:400px;text-align:center;-webkit-text-stroke:0.35px #f98a0c;letter-spacing:0.1px;">Radius</div>
<div class="t" style="top:75.24px;font-size:11px;color:#8d9194;font-weight:normal;left:718px;width:400px;text-align:center;-webkit-text-stroke:0.35px #8d9194;letter-spacing:0.1px;">Ortho</div>
<div class="t" style="top:75.24px;font-size:11px;color:#8d9194;font-weight:normal;left:787.5px;width:400px;text-align:center;-webkit-text-stroke:0.35px #8d9194;letter-spacing:0.1px;">Continue</div>
<div class="t" style="top:75.24px;font-size:11px;color:#f98a0c;font-weight:normal;left:852px;width:400px;text-align:center;-webkit-text-stroke:0.35px #f98a0c;letter-spacing:0.1px;">Add O.</div>
<div class="t" style="top:75.24px;font-size:11px;color:#f98a0c;font-weight:normal;left:921px;width:400px;text-align:center;-webkit-text-stroke:0.35px #f98a0c;letter-spacing:0.1px;">Zoom</div>
<div class="t" style="top:75.24px;font-size:11px;color:#f98a0c;font-weight:normal;left:985px;width:400px;text-align:center;-webkit-text-stroke:0.35px #f98a0c;letter-spacing:0.1px;">Pan</div>
<div class="t" style="top:75.24px;font-size:11px;color:#f98a0c;font-weight:normal;left:1236px;-webkit-text-stroke:0.35px #f98a0c;">E</div>
<div class="sep" style="left:553.5px"></div>
<div class="sep" style="left:751.0px"></div>
<div class="sep" style="left:821.0px"></div>
<div class="sep" style="left:954.0px"></div>
<div class="sep" style="left:1087.3px"></div>
<div class="sep" style="left:1220.0px"></div>
<div class="a" style="left:0;top:91px;width:42px;height:779px;background:#0b1d29"></div>
<div class="a" style="left:0;top:91px;width:2px;height:95px;background:#f98a0c"></div>
<div class="a" style="left:0;top:195px;width:1.5px;height:463px;background:#1f2636"></div>
<div class="t" style="left:29.22px;top:131.2px;font-size:14.5px;color:#f98a0c;letter-spacing:-0.250px;-webkit-text-stroke:0.35px #f98a0c;transform:rotate(90deg);transform-origin:0 0">PLANS</div>
<div class="t" style="left:29.22px;top:236.8px;font-size:14.5px;color:#e3e8ec;letter-spacing:-1.077px;-webkit-text-stroke:0;transform:rotate(90deg);transform-origin:0 0">REPORT</div>
<div class="t" style="left:29.22px;top:348.8px;font-size:14.5px;color:#e3e8ec;letter-spacing:-0.987px;-webkit-text-stroke:0;transform:rotate(90deg);transform-origin:0 0">BUDGET</div>
<div class="t" style="left:29.22px;top:462.4px;font-size:14.5px;color:#e3e8ec;letter-spacing:-1.072px;-webkit-text-stroke:0;transform:rotate(90deg);transform-origin:0 0">QUOTE</div>
<div class="t" style="left:29.22px;top:562.4px;font-size:14.5px;color:#e3e8ec;letter-spacing:-0.294px;-webkit-text-stroke:0;transform:rotate(90deg);transform-origin:0 0">ESTIMATION</div>
<svg class="a" style="left:0;top:91px" width="42" height="570" viewBox="0 91 42 570">
<!-- compass -->
<circle cx="21.9" cy="103.4" r="3.1" fill="none" stroke="#f98a0c" stroke-width="2.4"/>
<path d="M20.6 106.5 L13.2 119.2 M23.2 106.5 L30.8 119.2" stroke="#f98a0c" stroke-width="3.2" stroke-linecap="round"/>
<path d="M13.5 109.8 Q21 117 30.6 109.6" fill="none" stroke="#f98a0c" stroke-width="2.6" stroke-linecap="round"/>
<!-- report -->
<path d="M13 206.5 V222.5 H31.5" fill="none" stroke="#dfe3e6" stroke-width="1.6"/>
<path d="M17 210 H27.5 M17 214 H29 M17 217.8 H26" stroke="#dfe3e6" stroke-width="1.6"/>
<!-- money bag -->
<path d="M16.5 318 Q22 320 27.5 318 L25 323.5 Q33 329 32.5 333.5 Q32 337.2 27 337.2 H17 Q12 337.2 11.5 333.5 Q11 329 19 323.5 Z" fill="#e0e3e6"/>
<text x="22" y="334.5" font-size="10" font-weight="bold" text-anchor="middle" fill="#0b1d29" font-family="Liberation Sans">$</text>
<!-- quote doc -->
<path d="M15.5 431.5 H25 L29.4 436 V448.5 Q29.4 450 28 450 H15.5 Q14 450 14 448.5 V433 Q14 431.5 15.5 431.5 Z" fill="#e0e3e6"/>
<text x="21.7" y="446.5" font-size="9.5" font-weight="bold" text-anchor="middle" fill="#0b1d29" font-family="Liberation Sans">$</text>
</svg>
<svg class="a" style="left:9.3px;top:536px" width="24.7" height="14.5" viewBox="8.2 13 42.9 25.2" preserveAspectRatio="none">
<g fill="none" stroke="#8cc63e" stroke-width="5.5">
<path d="M17.8 20.1 L12.3 25.6 L21 34.3 L26.5 28.8"/>
<path d="M19 14.9 L38.4 34.3 L47.1 25.6 L38.4 16.9 L33.05 22.25"/></g></svg>
<div class="a" style="left:42px;top:91px;width:662px;height:41px;background:#1f2c35"></div>
<div class="a" style="left:42px;top:132px;width:662px;height:36px;background:#1f2c35"></div>
<div class="a" style="left:42px;top:168px;width:662px;height:84px;background:#07121a"></div>
<div class="a" style="left:42px;top:252px;width:662px;height:576px;background:#36444f"></div>
<div class="a" style="left:42px;top:827px;width:662px;height:43px;background:#07121a"></div>
<div class="a" style="left:43px;top:132px;width:3px;height:738px;background:#c9cad6"></div>
<svg class="a" style="left:52px;top:105px" width="13" height="17" viewBox="0 0 13 17">
<path d="M1.8 0.5 H8.6 L12.5 4.4 V15.2 Q12.5 16.5 11.2 16.5 H1.8 Q0.5 16.5 0.5 15.2 V1.8 Q0.5 0.5 1.8 0.5Z" fill="#fff"/>
<path d="M8.6 0.5 V4.4 H12.5" fill="#c8cbce"/>
<path d="M3.6 9.2 H9.4 M3.6 11.4 H9.4 M3.6 13.6 H9.4" stroke="#50565e" stroke-width="0.9"/></svg>
<svg class="a" style="left:52px;top:141px" width="13" height="17" viewBox="0 0 13 17">
<path d="M1.8 0.5 H8.6 L12.5 4.4 V15.2 Q12.5 16.5 11.2 16.5 H1.8 Q0.5 16.5 0.5 15.2 V1.8 Q0.5 0.5 1.8 0.5Z" fill="#fff"/>
<path d="M8.6 0.5 V4.4 H12.5" fill="#c8cbce"/>
<path d="M3.6 9.2 H9.4 M3.6 11.4 H9.4 M3.6 13.6 H9.4" stroke="#50565e" stroke-width="0.9"/></svg>
<div class="t" style="top:104.76px;font-size:16.5px;color:#f4f6f7;font-weight:normal;letter-spacing:-0.741px;left:68.6px;">6 - Ground Floor</div>
<div class="t" style="top:141.96px;font-size:16.5px;color:#fff;font-weight:bold;letter-spacing:-0.839px;left:68.3px;">7 - Upstairs</div>
<div class="a" style="left:607.4px;top:144.1px;width:3.2px;height:3.2px;border-radius:50%;background:#fff"></div><div class="a" style="left:607.4px;top:149.1px;width:3.2px;height:3.2px;border-radius:50%;background:#fff"></div><div class="a" style="left:607.4px;top:154.1px;width:3.2px;height:3.2px;border-radius:50%;background:#fff"></div>
<svg class="a" style="left:560px;top:130px" width="140" height="170" viewBox="560 130 140 170">
<path d="M645 144.8 V157 M638.8 150.9 H651.2" stroke="#fff" stroke-width="2"/>
<path d="M674.2 154.4 L680 148.4 L685.8 154.4" fill="none" stroke="#fff" stroke-width="1.8"/>
<path d="M609 263.2 V276 M602.6 269.6 H615.4" stroke="#fff" stroke-width="2"/>
<!-- copy -->
<path d="M642 262.5 H649 Q651.5 262.5 651.5 265 V272.5 Q651.5 274 650 274 H642 Q640.5 274 640.5 272.5 V264 Q640.5 262.5 642 262.5Z" fill="#fff"/>
<path d="M638.6 266.5 V276.2 H647.5" fill="none" stroke="#fff" stroke-width="1.6"/>
<!-- eye -->
<path d="M671 269.7 Q680 260 689 269.7 Q680 279.4 671 269.7Z" fill="#fff"/>
<circle cx="680" cy="269.7" r="3.6" fill="#36444f"/><circle cx="680" cy="269.7" r="2.2" fill="#fff"/>
</svg>
<div class="a" style="left:572.4px;top:263.09999999999997px;width:3.2px;height:3.2px;border-radius:50%;background:#fff"></div><div class="a" style="left:572.4px;top:268.09999999999997px;width:3.2px;height:3.2px;border-radius:50%;background:#fff"></div><div class="a" style="left:572.4px;top:273.09999999999997px;width:3.2px;height:3.2px;border-radius:50%;background:#fff"></div>
<svg class="a" style="left:67px;top:180.5px" width="20" height="20" viewBox="0 0 20 20">
<path d="M3.2 3.5 H16.4 L11.9 10.3 L16.4 16.7 H3.2 Z" fill="#5a4633" stroke="#f5a556" stroke-width="2.3" stroke-linejoin="round"/>
<g fill="#7d8590" stroke="#f5a556" stroke-width="1.2"><circle cx="3.2" cy="3.5" r="1.7"/><circle cx="16.4" cy="3.5" r="1.7"/><circle cx="11.9" cy="10.3" r="1.7"/><circle cx="16.4" cy="16.7" r="1.7"/><circle cx="3.2" cy="16.7" r="1.7"/></g></svg>
<svg class="a" style="left:67px;top:222.3px" width="20" height="20" viewBox="0 0 20 20">
<path d="M9.2 2.9 L4.7 13.1 L15.7 17.4" fill="none" stroke="#c0702a" stroke-width="2"/>
<g fill="#7d8590" stroke="#c0702a" stroke-width="1.3"><circle cx="9.2" cy="2.9" r="2"/><circle cx="4.7" cy="13.1" r="2"/><circle cx="15.7" cy="17.4" r="2"/></g></svg>
<svg class="a" style="left:67px;top:259.5px" width="20" height="20" viewBox="0 0 20 20">
<path d="M9.2 2.9 L4.7 13.1 L15.7 17.4" fill="none" stroke="#c0702a" stroke-width="2"/>
<g fill="#7d8590" stroke="#c0702a" stroke-width="1.3"><circle cx="9.2" cy="2.9" r="2"/><circle cx="4.7" cy="13.1" r="2"/><circle cx="15.7" cy="17.4" r="2"/></g></svg>
<svg class="a" style="left:66px;top:838.5px" width="20" height="20" viewBox="0 0 20 20">
<path d="M3.2 3.5 H16.4 L11.9 10.3 L16.4 16.7 H3.2 Z" fill="#3c3b2c" stroke="#a39452" stroke-width="2.3" stroke-linejoin="round"/>
<g fill="#7d8590" stroke="#a39452" stroke-width="1.2"><circle cx="3.2" cy="3.5" r="1.7"/><circle cx="16.4" cy="3.5" r="1.7"/><circle cx="11.9" cy="10.3" r="1.7"/><circle cx="16.4" cy="16.7" r="1.7"/><circle cx="3.2" cy="16.7" r="1.7"/></g></svg>
<div class="t" style="left:103.6px;top:183.6px;font-size:13px;letter-spacing:0.12px"><span style="color:#f3f5f6;">06.20 Wood Floor Structure</span><span style="color:#a9b0b5;"> · </span><span style="color:#f7881f;">House</span></div>
<div class="t" style="left:103.6px;top:226.3px;font-size:13px;letter-spacing:0.12px"><span style="color:#f3f5f6;">06.30 Ext. Insulat. Walls</span><span style="color:#a9b0b5;"> · </span><span style="color:#f7881f;">House</span><span style="color:#a9b0b5;"> · </span><span style="color:#9aa1a7;">Height </span><span style="color:#f5c518;font-weight:bold;">8'</span></div>
<div class="t" style="left:103.6px;top:263.29999999999995px;font-size:13px;letter-spacing:0.12px"><span style="color:#f3f5f6;">06.40 Int. Partition</span><span style="color:#a9b0b5;"> · </span><span style="color:#f0d9a8;">Standard 2x3</span><span style="color:#a9b0b5;"> · </span><span style="color:#f7881f;">House</span><span style="color:#a9b0b5;"> · </span><span style="color:#9aa1a7;">Height </span><span style="color:#f5c518;font-weight:bold;">8'</span></div>
<div class="t" style="left:103px;top:842.9px;font-size:13px;letter-spacing:0.12px"><span style="color:#9ea3a7;">06.50 Ceiling Insul.</span><span style="color:#a9b0b5;"> · </span><span style="color:#a79f8f;">Under joists + Drywall</span><span style="color:#a9b0b5;"> · </span><span style="color:#b0661f;">House</span></div>
<div class="t" style="top:183.92px;font-size:13px;color:#f3f5f6;font-weight:normal;letter-spacing:-0.051px;right:547px;margin-right:0.05px;">$ 12,280</div>
<div class="t" style="top:225.22px;font-size:13px;color:#f3f5f6;font-weight:normal;letter-spacing:-0.051px;right:547px;margin-right:0.05px;">$ 14,755</div>
<div class="t" style="top:284.92px;font-size:13px;color:#f3f5f6;font-weight:normal;letter-spacing:0.07px;right:547px;margin-right:-0.07px;">$ 11,492</div>
<div class="t" style="top:842.92px;font-size:13px;color:#9ea3a7;font-weight:normal;letter-spacing:0.018px;right:547px;margin-right:-0.02px;">$ 8,052</div>
<div class="t" style="top:314.42px;font-size:13px;color:#9ba4ab;font-weight:bold;letter-spacing:0.07px;left:66px;">Properties</div>
<div class="t" style="top:314.42px;font-size:13px;color:#9ba4ab;font-weight:bold;letter-spacing:-0.137px;left:163.4px;">Results</div>
<div class="t" style="top:314.42px;font-size:13px;color:#f3f5f6;font-weight:bold;letter-spacing:-0.229px;left:252.9px;">Budget</div>
<div class="a" style="left:46px;top:338.6px;width:658px;height:1px;background:#4d5a64"></div>
<div class="a" style="left:231px;top:336.8px;width:88px;height:2.5px;background:#fff"></div>
<svg class="a" style="left:670px;top:311px" width="22" height="18" viewBox="670 311 22 18">
<path d="M673 321 H678.6 M678.6 316.3 V326.6" fill="none" stroke="#e6e9eb" stroke-width="1.3"/>
<path d="M678.6 318.6 L683.2 315.6 H688.6 V325.4 H683.2 L678.6 323.4" fill="none" stroke="#e6e9eb" stroke-width="1.2" stroke-linejoin="round"/></svg>
<div class="a" style="left:58px;top:359px;width:549.5px;height:25.5px;background:#4b5863;border-radius:4px"></div>
<div class="t" style="top:365.36px;font-size:14px;color:#f2c31a;font-weight:bold;letter-spacing:0.323px;left:62px;">Standard 2x3</div>
<svg class="a" style="left:592px;top:366px" width="14" height="10" viewBox="0 0 14 10">
<path d="M2.5 2.8 L7 7.2 L11.5 2.8" fill="none" stroke="#f2c31a" stroke-width="1.8"/></svg>
<div class="a" style="left:617.4px;top:361px;width:21.2px;height:21.6px;background:#4b5863;border-radius:4px"></div>
<svg class="a" style="left:617.4px;top:361px" width="22" height="22" viewBox="0 0 22 22">
<path d="M10.6 5.5 V16.3 M5.2 10.9 H16" stroke="#fff" stroke-width="1.7"/></svg>
<div class="a" style="left:60px;top:420.3px;width:713px;height:2px;background:#65717a"></div>
<div class="a" style="left:60px;top:578.3px;width:713px;height:1.5px;background:linear-gradient(90deg,rgba(84,97,106,0) 0px,#54616a 70px)"></div>
<div class="a" style="left:60px;top:686px;width:713px;height:1.5px;background:linear-gradient(90deg,rgba(84,97,106,0) 0px,#54616a 70px)"></div>
<div class="a" style="left:60px;top:789.8px;width:713px;height:1.5px;background:linear-gradient(90deg,rgba(84,97,106,0) 0px,#54616a 70px)"></div>
<svg class="a" style="left:70.5px;top:403.2px" width="11" height="7" viewBox="0 0 11 7"><path d="M1 1.2 L5.5 5.6 L10 1.2" fill="none" stroke="#7f8b94" stroke-width="1.3"/></svg>
<div class="t" style="top:399.15px;font-size:17.8px;color:#fff;font-weight:bold;letter-spacing:-0.05px;left:86.5px;">Totals</div>
<div class="t" style="top:400.32px;font-size:13px;color:#f3f5f6;font-weight:bold;letter-spacing:-0.3px;right:867px;margin-right:0.30px;">$ 12.17</div>
<div class="t" style="top:400.32px;font-size:13px;color:#f3f5f6;font-weight:bold;letter-spacing:-0.3px;left:407px;">/ sq ft</div>
<div class="t" style="top:400.32px;font-size:13px;color:#f3f5f6;font-weight:bold;letter-spacing:-0.3px;left:456.7px;">x NA</div>
<div class="t" style="top:400.32px;font-size:13px;color:#f3f5f6;font-weight:bold;letter-spacing:-0.35px;right:666px;margin-right:0.35px;">943.88 sq ft</div>
<div class="t" style="top:400.32px;font-size:13px;color:#f3f5f6;font-weight:bold;left:475.79999999999995px;width:400px;text-align:center;">=</div>
<div class="t" style="top:400.32px;font-size:13px;color:#f3f5f6;font-weight:bold;letter-spacing:-0.25px;right:502.29999999999995px;margin-right:0.25px;">$ 11,492</div>
<svg class="a" style="left:70.5px;top:440.4px" width="11" height="7" viewBox="0 0 11 7"><path d="M1 1.2 L5.5 5.6 L10 1.2" fill="none" stroke="#7f8b94" stroke-width="1.3"/></svg>
<div class="t" style="left:90.8px;top:435.16px;font-size:14px;font-weight:bold;color:#f2c31a;letter-spacing:-0.45px;text-decoration:underline;text-underline-offset:1.5px;text-decoration-thickness:1px">Material</div>
<div class="t" style="top:433.12px;font-size:15.5px;color:#f3f5f6;font-weight:normal;left:144.75593750000002px;width:400px;text-align:center;">±</div>
<div class="t" style="top:435.32px;font-size:13px;color:#f3f5f6;font-weight:bold;letter-spacing:-0.4px;right:850px;margin-right:0.40px;">$ 1.95</div>
<div class="t" style="top:435.32px;font-size:13px;color:#f2c31a;font-weight:bold;letter-spacing:-0.3px;left:407px;">/ sq ft</div>
<div class="t" style="top:435.32px;font-size:13px;color:#f2c31a;font-weight:bold;letter-spacing:-0.3px;left:456.7px;">x NA</div>
<div class="t" style="top:435.32px;font-size:13px;color:#f2c31a;font-weight:bold;letter-spacing:-0.35px;right:666px;margin-right:0.35px;">943.88 sq ft</div>
<div class="a" style="left:585.2px;top:432.59999999999997px;width:30.6px;height:19.7px;background:#5c5d43;border-radius:3px;box-shadow:inset 0 0 0 0.6px #6d6a43"></div><div class="t" style="top:435.92px;font-size:13px;color:#f2c31a;font-weight:bold;left:396.79999999999995px;width:400px;text-align:center;">×</div><div class="t" style="top:435.22px;font-size:13px;color:#f2c31a;font-weight:bold;left:405.20000000000005px;width:400px;text-align:center;">1</div>
<div class="t" style="top:435.32px;font-size:13px;color:#f3f5f6;font-weight:bold;left:475.79999999999995px;width:400px;text-align:center;">=</div>
<div class="t" style="top:435.32px;font-size:13px;color:#f3f5f6;font-weight:bold;letter-spacing:-0.45px;right:503px;margin-right:0.45px;">$ 1,841</div>
<div class="a" style="left:751px;top:432.09999999999997px;width:20.5px;height:20px;background:#36444f;border-radius:4px"></div><svg class="a" style="left:751px;top:432.09999999999997px" width="21" height="20" viewBox="0 0 21 20"><path d="M10.3 5 V15 M5.3 10 H15.3" stroke="#f2c31a" stroke-width="2.6"/></svg>
<div class="t" style="top:458.82px;font-size:13px;color:#f2c31a;font-weight:normal;letter-spacing:-0.5px;left:75.6px;">Baseboards</div>
<div class="t" style="top:458.82px;font-size:13px;color:#f2c31a;font-weight:normal;letter-spacing:-0.45px;right:850.5px;margin-right:0.45px;">$ 2.00</div>
<div class="t" style="top:458.82px;font-size:13px;color:#f2c31a;font-weight:normal;letter-spacing:-0.3px;left:407px;">/ ft</div>
<div class="t" style="top:458.82px;font-size:13px;color:#f2c31a;font-weight:normal;letter-spacing:-0.3px;left:456.7px;">x L</div>
<div class="t" style="top:458.82px;font-size:13px;color:#f2c31a;font-weight:normal;letter-spacing:-0.22px;right:666.5px;margin-right:0.22px;">117' 11-13/16" ft</div>
<div class="a" style="left:585.2px;top:456.09999999999997px;width:30.6px;height:19.7px;background:#5c5d43;border-radius:3px;box-shadow:inset 0 0 0 0.6px #6d6a43"></div><div class="t" style="top:459.42px;font-size:13px;color:#f2c31a;font-weight:bold;left:396.79999999999995px;width:400px;text-align:center;">×</div><div class="t" style="top:458.72px;font-size:13px;color:#f2c31a;font-weight:bold;left:405.20000000000005px;width:400px;text-align:center;">1</div>
<div class="t" style="top:458.82px;font-size:13px;color:#f2c31a;font-weight:normal;left:432px;width:400px;text-align:center;">×</div>
<div class="t" style="top:458.82px;font-size:13px;color:#f2c31a;font-weight:normal;right:578.6px;margin-right:0.00px;">2</div>
<div class="t" style="top:458.82px;font-size:13px;color:#f3f5f6;font-weight:normal;left:475.79999999999995px;width:400px;text-align:center;">=</div>
<div class="a" style="left:690px;top:456.09999999999997px;width:54px;height:19.7px;background:#36444f;border-radius:3px"></div>
<div class="t" style="top:458.82px;font-size:13px;color:#f2c31a;font-weight:normal;letter-spacing:-0.45px;right:502.29999999999995px;margin-right:0.45px;">$ 472</div>
<div class="a" style="left:751px;top:456.09999999999997px;width:20.5px;height:19.7px;background:#36444f;border-radius:4px"></div><svg class="a" style="left:751px;top:456.09999999999997px" width="21" height="20" viewBox="0 0 21 20"><path d="M6 5.4 H15 M8.6 5.4 V4.3 H12.4 V5.4" fill="none" stroke="#e53935" stroke-width="1.3"/><path d="M6.6 6.8 H14.4 L13.7 15.2 Q13.6 16 12.8 16 H8.2 Q7.4 16 7.3 15.2 Z" fill="#e53935"/></svg>
<div class="t" style="top:482.92px;font-size:13px;color:#f2c31a;font-weight:normal;letter-spacing:-0.5px;left:75.6px;">Blocking 2x3</div>
<div class="t" style="top:482.92px;font-size:13px;color:#f2c31a;font-weight:normal;letter-spacing:-0.45px;right:850.5px;margin-right:0.45px;">$ 0.40</div>
<div class="t" style="top:482.92px;font-size:13px;color:#f2c31a;font-weight:normal;letter-spacing:-0.3px;left:407px;">/ ft</div>
<div class="t" style="top:482.92px;font-size:13px;color:#f2c31a;font-weight:normal;letter-spacing:-0.3px;left:456.7px;">x L</div>
<div class="t" style="top:482.92px;font-size:13px;color:#f2c31a;font-weight:normal;letter-spacing:-0.22px;right:666.5px;margin-right:0.22px;">117' 11-13/16" ft</div>
<div class="a" style="left:585.2px;top:480.2px;width:30.6px;height:19.7px;background:#5c5d43;border-radius:3px;box-shadow:inset 0 0 0 0.6px #6d6a43"></div><div class="t" style="top:483.52px;font-size:13px;color:#f2c31a;font-weight:bold;left:396.79999999999995px;width:400px;text-align:center;">×</div><div class="t" style="top:482.82px;font-size:13px;color:#f2c31a;font-weight:bold;left:405.20000000000005px;width:400px;text-align:center;">1</div>
<div class="t" style="top:482.92px;font-size:13px;color:#f2c31a;font-weight:normal;left:432px;width:400px;text-align:center;">×</div>
<div class="t" style="top:482.92px;font-size:13px;color:#f2c31a;font-weight:normal;right:578.6px;margin-right:0.00px;">1</div>
<div class="t" style="top:482.92px;font-size:13px;color:#f3f5f6;font-weight:normal;left:475.79999999999995px;width:400px;text-align:center;">=</div>
<div class="a" style="left:690px;top:480.2px;width:54px;height:19.7px;background:#36444f;border-radius:3px"></div>
<div class="t" style="top:482.92px;font-size:13px;color:#f2c31a;font-weight:normal;letter-spacing:-0.45px;right:502.29999999999995px;margin-right:0.45px;">$ 47</div>
<div class="a" style="left:751px;top:480.2px;width:20.5px;height:19.7px;background:#36444f;border-radius:4px"></div><svg class="a" style="left:751px;top:480.2px" width="21" height="20" viewBox="0 0 21 20"><path d="M6 5.4 H15 M8.6 5.4 V4.3 H12.4 V5.4" fill="none" stroke="#e53935" stroke-width="1.3"/><path d="M6.6 6.8 H14.4 L13.7 15.2 Q13.6 16 12.8 16 H8.2 Q7.4 16 7.3 15.2 Z" fill="#e53935"/></svg>
<div class="t" style="top:506.92px;font-size:13px;color:#f2c31a;font-weight:normal;letter-spacing:-0.5px;left:75.6px;">Bottom Top Plate 2x3</div>
<div class="t" style="top:506.92px;font-size:13px;color:#f2c31a;font-weight:normal;letter-spacing:-0.45px;right:850.5px;margin-right:0.45px;">$ 0.40</div>
<div class="t" style="top:506.92px;font-size:13px;color:#f2c31a;font-weight:normal;letter-spacing:-0.3px;left:407px;">/ ft</div>
<div class="t" style="top:506.92px;font-size:13px;color:#f2c31a;font-weight:normal;letter-spacing:-0.3px;left:456.7px;">x L</div>
<div class="t" style="top:506.92px;font-size:13px;color:#f2c31a;font-weight:normal;letter-spacing:-0.22px;right:666.5px;margin-right:0.22px;">117' 11-13/16" ft</div>
<div class="a" style="left:585.2px;top:504.2px;width:30.6px;height:19.7px;background:#5c5d43;border-radius:3px;box-shadow:inset 0 0 0 0.6px #6d6a43"></div><div class="t" style="top:507.52px;font-size:13px;color:#f2c31a;font-weight:bold;left:396.79999999999995px;width:400px;text-align:center;">×</div><div class="t" style="top:506.82px;font-size:13px;color:#f2c31a;font-weight:bold;left:405.20000000000005px;width:400px;text-align:center;">1</div>
<div class="t" style="top:506.92px;font-size:13px;color:#f2c31a;font-weight:normal;left:432px;width:400px;text-align:center;">×</div>
<div class="t" style="top:506.92px;font-size:13px;color:#f2c31a;font-weight:normal;right:578.6px;margin-right:0.00px;">2</div>
<div class="t" style="top:506.92px;font-size:13px;color:#f3f5f6;font-weight:normal;left:475.79999999999995px;width:400px;text-align:center;">=</div>
<div class="a" style="left:690px;top:504.2px;width:54px;height:19.7px;background:#36444f;border-radius:3px"></div>
<div class="t" style="top:506.92px;font-size:13px;color:#f2c31a;font-weight:normal;letter-spacing:-0.45px;right:502.29999999999995px;margin-right:0.45px;">$ 94</div>
<div class="a" style="left:751px;top:504.2px;width:20.5px;height:19.7px;background:#36444f;border-radius:4px"></div><svg class="a" style="left:751px;top:504.2px" width="21" height="20" viewBox="0 0 21 20"><path d="M6 5.4 H15 M8.6 5.4 V4.3 H12.4 V5.4" fill="none" stroke="#e53935" stroke-width="1.3"/><path d="M6.6 6.8 H14.4 L13.7 15.2 Q13.6 16 12.8 16 H8.2 Q7.4 16 7.3 15.2 Z" fill="#e53935"/></svg>
<div class="t" style="top:531.12px;font-size:13px;color:#f2c31a;font-weight:normal;letter-spacing:-0.5px;left:75.6px;">Drywall Regular 1/2"</div>
<div class="t" style="top:531.12px;font-size:13px;color:#f2c31a;font-weight:normal;letter-spacing:-0.45px;right:850.5px;margin-right:0.45px;">$ 0.50</div>
<div class="t" style="top:531.12px;font-size:13px;color:#f2c31a;font-weight:normal;letter-spacing:-0.3px;left:407px;">/ sq ft</div>
<div class="t" style="top:531.12px;font-size:13px;color:#f2c31a;font-weight:normal;letter-spacing:-0.3px;left:456.7px;">x NA</div>
<div class="t" style="top:531.12px;font-size:13px;color:#f2c31a;font-weight:normal;letter-spacing:-0.22px;right:666.5px;margin-right:0.22px;">943.88 sq ft</div>
<div class="a" style="left:585.2px;top:528.4000000000001px;width:30.6px;height:19.7px;background:#5c5d43;border-radius:3px;box-shadow:inset 0 0 0 0.6px #6d6a43"></div><div class="t" style="top:531.72px;font-size:13px;color:#f2c31a;font-weight:bold;left:396.79999999999995px;width:400px;text-align:center;">×</div><div class="t" style="top:531.02px;font-size:13px;color:#f2c31a;font-weight:bold;left:405.20000000000005px;width:400px;text-align:center;">1</div>
<div class="t" style="top:531.12px;font-size:13px;color:#f2c31a;font-weight:normal;left:432px;width:400px;text-align:center;">×</div>
<div class="t" style="top:531.12px;font-size:13px;color:#f2c31a;font-weight:normal;right:578.6px;margin-right:0.00px;">2</div>
<div class="t" style="top:531.12px;font-size:13px;color:#f3f5f6;font-weight:normal;left:475.79999999999995px;width:400px;text-align:center;">=</div>
<div class="a" style="left:690px;top:528.4000000000001px;width:54px;height:19.7px;background:#36444f;border-radius:3px"></div>
<div class="t" style="top:531.12px;font-size:13px;color:#f2c31a;font-weight:normal;letter-spacing:-0.45px;right:502.29999999999995px;margin-right:0.45px;">$ 944</div>
<div class="a" style="left:751px;top:528.4000000000001px;width:20.5px;height:19.7px;background:#36444f;border-radius:4px"></div><svg class="a" style="left:751px;top:528.4000000000001px" width="21" height="20" viewBox="0 0 21 20"><path d="M6 5.4 H15 M8.6 5.4 V4.3 H12.4 V5.4" fill="none" stroke="#e53935" stroke-width="1.3"/><path d="M6.6 6.8 H14.4 L13.7 15.2 Q13.6 16 12.8 16 H8.2 Q7.4 16 7.3 15.2 Z" fill="#e53935"/></svg>
<div class="t" style="top:554.92px;font-size:13px;color:#f2c31a;font-weight:normal;letter-spacing:-0.5px;left:75.6px;">Studs 2x3</div>
<div class="t" style="top:554.92px;font-size:13px;color:#f2c31a;font-weight:normal;letter-spacing:-0.45px;right:850.5px;margin-right:0.45px;">$ 0.40</div>
<div class="t" style="top:554.92px;font-size:13px;color:#f2c31a;font-weight:normal;letter-spacing:-0.3px;left:407px;">/ sq ft</div>
<div class="t" style="top:554.92px;font-size:13px;color:#f2c31a;font-weight:normal;letter-spacing:-0.3px;left:456.7px;">x NA</div>
<div class="t" style="top:554.92px;font-size:13px;color:#f2c31a;font-weight:normal;letter-spacing:-0.22px;right:666.5px;margin-right:0.22px;">943.88 sq ft</div>
<div class="a" style="left:585.2px;top:552.2px;width:30.6px;height:19.7px;background:#5c5d43;border-radius:3px;box-shadow:inset 0 0 0 0.6px #6d6a43"></div><div class="t" style="top:555.52px;font-size:13px;color:#f2c31a;font-weight:bold;left:396.79999999999995px;width:400px;text-align:center;">×</div><div class="t" style="top:554.82px;font-size:13px;color:#f2c31a;font-weight:bold;left:405.20000000000005px;width:400px;text-align:center;">1</div>
<div class="t" style="top:554.92px;font-size:13px;color:#f2c31a;font-weight:normal;letter-spacing:-0.5px;right:578.6px;margin-right:0.50px;">×0.75</div>
<div class="t" style="top:554.92px;font-size:13px;color:#f3f5f6;font-weight:normal;left:475.79999999999995px;width:400px;text-align:center;">=</div>
<div class="a" style="left:690px;top:552.2px;width:54px;height:19.7px;background:#36444f;border-radius:3px"></div>
<div class="t" style="top:554.92px;font-size:13px;color:#f2c31a;font-weight:normal;letter-spacing:-0.45px;right:502.29999999999995px;margin-right:0.45px;">$ 283</div>
<div class="a" style="left:751px;top:552.2px;width:20.5px;height:19.7px;background:#36444f;border-radius:4px"></div><svg class="a" style="left:751px;top:552.2px" width="21" height="20" viewBox="0 0 21 20"><path d="M6 5.4 H15 M8.6 5.4 V4.3 H12.4 V5.4" fill="none" stroke="#e53935" stroke-width="1.3"/><path d="M6.6 6.8 H14.4 L13.7 15.2 Q13.6 16 12.8 16 H8.2 Q7.4 16 7.3 15.2 Z" fill="#e53935"/></svg>
<svg class="a" style="left:70.5px;top:594.5px" width="11" height="7" viewBox="0 0 11 7"><path d="M1 1.2 L5.5 5.6 L10 1.2" fill="none" stroke="#7f8b94" stroke-width="1.3"/></svg>
<div class="t" style="left:90.8px;top:589.26px;font-size:14px;font-weight:bold;color:#f2c31a;letter-spacing:-0.45px;text-decoration:underline;text-underline-offset:1.5px;text-decoration-thickness:1px">Labor</div>
<div class="t" style="top:587.22px;font-size:15.5px;color:#f3f5f6;font-weight:normal;left:137.92570312499998px;width:400px;text-align:center;">±</div>
<div class="t" style="top:589.42px;font-size:13px;color:#f3f5f6;font-weight:bold;letter-spacing:-0.4px;right:850px;margin-right:0.40px;">$ 29.00</div>
<div class="t" style="top:589.42px;font-size:13px;color:#f2c31a;font-weight:bold;letter-spacing:-0.3px;left:407px;">/ ft</div>
<div class="t" style="top:589.42px;font-size:13px;color:#f2c31a;font-weight:bold;letter-spacing:-0.3px;left:456.7px;">x L</div>
<div class="t" style="top:589.42px;font-size:13px;color:#f2c31a;font-weight:bold;letter-spacing:-0.35px;right:666px;margin-right:0.35px;">117' 11-13/16" ft</div>
<div class="a" style="left:585.2px;top:586.7px;width:30.6px;height:19.7px;background:#5c5d43;border-radius:3px;box-shadow:inset 0 0 0 0.6px #6d6a43"></div><div class="t" style="top:590.02px;font-size:13px;color:#f2c31a;font-weight:bold;left:396.79999999999995px;width:400px;text-align:center;">×</div><div class="t" style="top:589.32px;font-size:13px;color:#f2c31a;font-weight:bold;left:405.20000000000005px;width:400px;text-align:center;">1</div>
<div class="t" style="top:589.42px;font-size:13px;color:#f3f5f6;font-weight:bold;left:475.79999999999995px;width:400px;text-align:center;">=</div>
<div class="t" style="top:589.42px;font-size:13px;color:#f3f5f6;font-weight:bold;letter-spacing:-0.45px;right:503px;margin-right:0.45px;">$ 3,422</div>
<div class="a" style="left:751px;top:586.2px;width:20.5px;height:20px;background:#36444f;border-radius:4px"></div><svg class="a" style="left:751px;top:586.2px" width="21" height="20" viewBox="0 0 21 20"><path d="M10.3 5 V15 M5.3 10 H15.3" stroke="#f2c31a" stroke-width="2.6"/></svg>
<div class="t" style="top:612.42px;font-size:13px;color:#f2c31a;font-weight:normal;letter-spacing:-0.5px;left:75.6px;">LAB Baseboards</div>
<div class="t" style="top:612.42px;font-size:13px;color:#f2c31a;font-weight:normal;letter-spacing:-0.45px;right:850.5px;margin-right:0.45px;">$ 1.50</div>
<div class="t" style="top:612.42px;font-size:13px;color:#f2c31a;font-weight:normal;letter-spacing:-0.3px;left:407px;">/ ft</div>
<div class="t" style="top:612.42px;font-size:13px;color:#f2c31a;font-weight:normal;letter-spacing:-0.3px;left:456.7px;">x L</div>
<div class="t" style="top:612.42px;font-size:13px;color:#f2c31a;font-weight:normal;letter-spacing:-0.22px;right:666.5px;margin-right:0.22px;">117' 11-13/16" ft</div>
<div class="a" style="left:585.2px;top:609.7px;width:30.6px;height:19.7px;background:#5c5d43;border-radius:3px;box-shadow:inset 0 0 0 0.6px #6d6a43"></div><div class="t" style="top:613.02px;font-size:13px;color:#f2c31a;font-weight:bold;left:396.79999999999995px;width:400px;text-align:center;">×</div><div class="t" style="top:612.32px;font-size:13px;color:#f2c31a;font-weight:bold;left:405.20000000000005px;width:400px;text-align:center;">1</div>
<div class="t" style="top:612.42px;font-size:13px;color:#f2c31a;font-weight:normal;left:432px;width:400px;text-align:center;">×</div>
<div class="t" style="top:612.42px;font-size:13px;color:#f2c31a;font-weight:normal;right:578.6px;margin-right:0.00px;">2</div>
<div class="t" style="top:612.42px;font-size:13px;color:#f3f5f6;font-weight:normal;left:475.79999999999995px;width:400px;text-align:center;">=</div>
<div class="a" style="left:690px;top:609.7px;width:54px;height:19.7px;background:#36444f;border-radius:3px"></div>
<div class="t" style="top:612.42px;font-size:13px;color:#f2c31a;font-weight:normal;letter-spacing:-0.45px;right:502.29999999999995px;margin-right:0.45px;">$ 354</div>
<div class="a" style="left:751px;top:609.7px;width:20.5px;height:19.7px;background:#36444f;border-radius:4px"></div><svg class="a" style="left:751px;top:609.7px" width="21" height="20" viewBox="0 0 21 20"><path d="M6 5.4 H15 M8.6 5.4 V4.3 H12.4 V5.4" fill="none" stroke="#e53935" stroke-width="1.3"/><path d="M6.6 6.8 H14.4 L13.7 15.2 Q13.6 16 12.8 16 H8.2 Q7.4 16 7.3 15.2 Z" fill="#e53935"/></svg>
<div class="t" style="top:636.62px;font-size:13px;color:#f2c31a;font-weight:normal;letter-spacing:-0.5px;left:75.6px;">LAB Drywall</div>
<div class="t" style="top:636.62px;font-size:13px;color:#f2c31a;font-weight:normal;letter-spacing:-0.45px;right:850.5px;margin-right:0.45px;">$ 1.00</div>
<div class="t" style="top:636.62px;font-size:13px;color:#f2c31a;font-weight:normal;letter-spacing:-0.3px;left:407px;">/ sq ft</div>
<div class="t" style="top:636.62px;font-size:13px;color:#f2c31a;font-weight:normal;letter-spacing:-0.3px;left:456.7px;">x NA</div>
<div class="t" style="top:636.62px;font-size:13px;color:#f2c31a;font-weight:normal;letter-spacing:-0.22px;right:666.5px;margin-right:0.22px;">943.88 sq ft</div>
<div class="a" style="left:585.2px;top:633.9000000000001px;width:30.6px;height:19.7px;background:#5c5d43;border-radius:3px;box-shadow:inset 0 0 0 0.6px #6d6a43"></div><div class="t" style="top:637.22px;font-size:13px;color:#f2c31a;font-weight:bold;left:396.79999999999995px;width:400px;text-align:center;">×</div><div class="t" style="top:636.52px;font-size:13px;color:#f2c31a;font-weight:bold;left:405.20000000000005px;width:400px;text-align:center;">1</div>
<div class="t" style="top:636.62px;font-size:13px;color:#f2c31a;font-weight:normal;left:432px;width:400px;text-align:center;">×</div>
<div class="t" style="top:636.62px;font-size:13px;color:#f2c31a;font-weight:normal;right:578.6px;margin-right:0.00px;">2</div>
<div class="t" style="top:636.62px;font-size:13px;color:#f3f5f6;font-weight:normal;left:475.79999999999995px;width:400px;text-align:center;">=</div>
<div class="a" style="left:690px;top:633.9000000000001px;width:54px;height:19.7px;background:#36444f;border-radius:3px"></div>
<div class="t" style="top:636.62px;font-size:13px;color:#f2c31a;font-weight:normal;letter-spacing:-0.45px;right:502.29999999999995px;margin-right:0.45px;">$ 1,888</div>
<div class="a" style="left:751px;top:633.9000000000001px;width:20.5px;height:19.7px;background:#36444f;border-radius:4px"></div><svg class="a" style="left:751px;top:633.9000000000001px" width="21" height="20" viewBox="0 0 21 20"><path d="M6 5.4 H15 M8.6 5.4 V4.3 H12.4 V5.4" fill="none" stroke="#e53935" stroke-width="1.3"/><path d="M6.6 6.8 H14.4 L13.7 15.2 Q13.6 16 12.8 16 H8.2 Q7.4 16 7.3 15.2 Z" fill="#e53935"/></svg>
<div class="t" style="top:661.42px;font-size:13px;color:#f2c31a;font-weight:normal;letter-spacing:-0.5px;left:75.6px;">LAB Partition Framing</div>
<div class="t" style="top:661.42px;font-size:13px;color:#f2c31a;font-weight:normal;letter-spacing:-0.45px;right:850.5px;margin-right:0.45px;">$ 10.00</div>
<div class="t" style="top:661.42px;font-size:13px;color:#f2c31a;font-weight:normal;letter-spacing:-0.3px;left:407px;">/ ft</div>
<div class="t" style="top:661.42px;font-size:13px;color:#f2c31a;font-weight:normal;letter-spacing:-0.3px;left:456.7px;">x L</div>
<div class="t" style="top:661.42px;font-size:13px;color:#f2c31a;font-weight:normal;letter-spacing:-0.22px;right:666.5px;margin-right:0.22px;">117' 11-13/16" ft</div>
<div class="a" style="left:585.2px;top:658.7px;width:30.6px;height:19.7px;background:#5c5d43;border-radius:3px;box-shadow:inset 0 0 0 0.6px #6d6a43"></div><div class="t" style="top:662.02px;font-size:13px;color:#f2c31a;font-weight:bold;left:396.79999999999995px;width:400px;text-align:center;">×</div><div class="t" style="top:661.32px;font-size:13px;color:#f2c31a;font-weight:bold;left:405.20000000000005px;width:400px;text-align:center;">1</div>
<div class="t" style="top:661.42px;font-size:13px;color:#f2c31a;font-weight:normal;left:432px;width:400px;text-align:center;">×</div>
<div class="t" style="top:661.42px;font-size:13px;color:#f2c31a;font-weight:normal;right:578.6px;margin-right:0.00px;">1</div>
<div class="t" style="top:661.42px;font-size:13px;color:#f3f5f6;font-weight:normal;left:475.79999999999995px;width:400px;text-align:center;">=</div>
<div class="a" style="left:690px;top:658.7px;width:54px;height:19.7px;background:#36444f;border-radius:3px"></div>
<div class="t" style="top:661.42px;font-size:13px;color:#f2c31a;font-weight:normal;letter-spacing:-0.45px;right:502.29999999999995px;margin-right:0.45px;">$ 1,180</div>
<div class="a" style="left:751px;top:658.7px;width:20.5px;height:19.7px;background:#36444f;border-radius:4px"></div><svg class="a" style="left:751px;top:658.7px" width="21" height="20" viewBox="0 0 21 20"><path d="M6 5.4 H15 M8.6 5.4 V4.3 H12.4 V5.4" fill="none" stroke="#e53935" stroke-width="1.3"/><path d="M6.6 6.8 H14.4 L13.7 15.2 Q13.6 16 12.8 16 H8.2 Q7.4 16 7.3 15.2 Z" fill="#e53935"/></svg>
<svg class="a" style="left:73.5px;top:698.5999999999999px" width="7" height="11" viewBox="0 0 7 11"><path d="M1.2 1 L5.6 5.5 L1.2 10" fill="none" stroke="#a3abb1" stroke-width="1.3"/></svg>
<div class="t" style="left:90.8px;top:696.06px;font-size:14px;font-weight:normal;color:#aab1b7;letter-spacing:-0.15px;text-decoration:underline;text-underline-offset:1.5px;text-decoration-thickness:1px">Equipment</div>
<div class="a" style="left:751px;top:693.0px;width:20.5px;height:20px;background:#36444f;border-radius:4px"></div><svg class="a" style="left:751px;top:693.0px" width="21" height="20" viewBox="0 0 21 20"><path d="M10.3 5 V15 M5.3 10 H15.3" stroke="#f2c31a" stroke-width="2.6"/></svg>
<svg class="a" style="left:70.5px;top:724.0px" width="11" height="7" viewBox="0 0 11 7"><path d="M1 1.2 L5.5 5.6 L10 1.2" fill="none" stroke="#7f8b94" stroke-width="1.3"/></svg>
<div class="t" style="left:90.8px;top:718.76px;font-size:14px;font-weight:bold;color:#f2c31a;letter-spacing:-0.45px;text-decoration:underline;text-underline-offset:1.5px;text-decoration-thickness:1px">Subcontractor</div>
<div class="t" style="top:718.92px;font-size:13px;color:#f3f5f6;font-weight:bold;letter-spacing:-0.4px;right:850px;margin-right:0.40px;">$ 6.60</div>
<div class="t" style="top:718.92px;font-size:13px;color:#f2c31a;font-weight:bold;letter-spacing:-0.3px;left:407px;">/ sq ft</div>
<div class="t" style="top:718.92px;font-size:13px;color:#f2c31a;font-weight:bold;letter-spacing:-0.3px;left:456.7px;">x NA</div>
<div class="t" style="top:718.92px;font-size:13px;color:#f2c31a;font-weight:bold;letter-spacing:-0.35px;right:666px;margin-right:0.35px;">943.88 sq ft</div>
<div class="a" style="left:585.2px;top:716.2px;width:30.6px;height:19.7px;background:#5c5d43;border-radius:3px;box-shadow:inset 0 0 0 0.6px #6d6a43"></div><div class="t" style="top:719.52px;font-size:13px;color:#f2c31a;font-weight:bold;left:396.79999999999995px;width:400px;text-align:center;">×</div><div class="t" style="top:718.82px;font-size:13px;color:#f2c31a;font-weight:bold;left:405.20000000000005px;width:400px;text-align:center;">1</div>
<div class="t" style="top:718.92px;font-size:13px;color:#f3f5f6;font-weight:bold;left:475.79999999999995px;width:400px;text-align:center;">=</div>
<div class="t" style="top:718.92px;font-size:13px;color:#f3f5f6;font-weight:bold;letter-spacing:-0.45px;right:503px;margin-right:0.45px;">$ 6,230</div>
<div class="a" style="left:751px;top:715.7px;width:20.5px;height:20px;background:#36444f;border-radius:4px"></div><svg class="a" style="left:751px;top:715.7px" width="21" height="20" viewBox="0 0 21 20"><path d="M10.3 5 V15 M5.3 10 H15.3" stroke="#f2c31a" stroke-width="2.6"/></svg>
<div class="t" style="top:741.72px;font-size:13px;color:#f2c31a;font-weight:normal;letter-spacing:-0.5px;left:75.6px;">SUB Joint Compound Mat.+Lab. 3 Coats</div>
<div class="t" style="top:741.72px;font-size:13px;color:#f2c31a;font-weight:normal;letter-spacing:-0.45px;right:850.5px;margin-right:0.45px;">$ 0.80</div>
<div class="t" style="top:741.72px;font-size:13px;color:#f2c31a;font-weight:normal;letter-spacing:-0.3px;left:407px;">/ sq ft</div>
<div class="t" style="top:741.72px;font-size:13px;color:#f2c31a;font-weight:normal;letter-spacing:-0.3px;left:456.7px;">x NA</div>
<div class="t" style="top:741.72px;font-size:13px;color:#f2c31a;font-weight:normal;letter-spacing:-0.22px;right:666.5px;margin-right:0.22px;">943.88 sq ft</div>
<div class="a" style="left:585.2px;top:739.0px;width:30.6px;height:19.7px;background:#5c5d43;border-radius:3px;box-shadow:inset 0 0 0 0.6px #6d6a43"></div><div class="t" style="top:742.32px;font-size:13px;color:#f2c31a;font-weight:bold;left:396.79999999999995px;width:400px;text-align:center;">×</div><div class="t" style="top:741.62px;font-size:13px;color:#f2c31a;font-weight:bold;left:405.20000000000005px;width:400px;text-align:center;">1</div>
<div class="t" style="top:741.72px;font-size:13px;color:#f2c31a;font-weight:normal;left:432px;width:400px;text-align:center;">×</div>
<div class="t" style="top:741.72px;font-size:13px;color:#f2c31a;font-weight:normal;right:578.6px;margin-right:0.00px;">2</div>
<div class="t" style="top:741.72px;font-size:13px;color:#f3f5f6;font-weight:normal;left:475.79999999999995px;width:400px;text-align:center;">=</div>
<div class="a" style="left:690px;top:739.0px;width:54px;height:19.7px;background:#36444f;border-radius:3px"></div>
<div class="t" style="top:741.72px;font-size:13px;color:#f2c31a;font-weight:normal;letter-spacing:-0.45px;right:502.29999999999995px;margin-right:0.45px;">$ 1,510</div>
<div class="a" style="left:751px;top:739.0px;width:20.5px;height:19.7px;background:#36444f;border-radius:4px"></div><svg class="a" style="left:751px;top:739.0px" width="21" height="20" viewBox="0 0 21 20"><path d="M6 5.4 H15 M8.6 5.4 V4.3 H12.4 V5.4" fill="none" stroke="#e53935" stroke-width="1.3"/><path d="M6.6 6.8 H14.4 L13.7 15.2 Q13.6 16 12.8 16 H8.2 Q7.4 16 7.3 15.2 Z" fill="#e53935"/></svg>
<div class="t" style="top:765.52px;font-size:13px;color:#f2c31a;font-weight:normal;letter-spacing:-0.5px;left:75.6px;">SUB Paint Mat.+Lab. Primer + 2 Finish Coats</div>
<div class="t" style="top:765.52px;font-size:13px;color:#f2c31a;font-weight:normal;letter-spacing:-0.45px;right:850.5px;margin-right:0.45px;">$ 2.50</div>
<div class="t" style="top:765.52px;font-size:13px;color:#f2c31a;font-weight:normal;letter-spacing:-0.3px;left:407px;">/ sq ft</div>
<div class="t" style="top:765.52px;font-size:13px;color:#f2c31a;font-weight:normal;letter-spacing:-0.3px;left:456.7px;">x NA</div>
<div class="t" style="top:765.52px;font-size:13px;color:#f2c31a;font-weight:normal;letter-spacing:-0.22px;right:666.5px;margin-right:0.22px;">943.88 sq ft</div>
<div class="a" style="left:585.2px;top:762.8000000000001px;width:30.6px;height:19.7px;background:#5c5d43;border-radius:3px;box-shadow:inset 0 0 0 0.6px #6d6a43"></div><div class="t" style="top:766.12px;font-size:13px;color:#f2c31a;font-weight:bold;left:396.79999999999995px;width:400px;text-align:center;">×</div><div class="t" style="top:765.42px;font-size:13px;color:#f2c31a;font-weight:bold;left:405.20000000000005px;width:400px;text-align:center;">1</div>
<div class="t" style="top:765.52px;font-size:13px;color:#f2c31a;font-weight:normal;left:432px;width:400px;text-align:center;">×</div>
<div class="t" style="top:765.52px;font-size:13px;color:#f2c31a;font-weight:normal;right:578.6px;margin-right:0.00px;">2</div>
<div class="t" style="top:765.52px;font-size:13px;color:#f3f5f6;font-weight:normal;left:475.79999999999995px;width:400px;text-align:center;">=</div>
<div class="a" style="left:690px;top:762.8000000000001px;width:54px;height:19.7px;background:#36444f;border-radius:3px"></div>
<div class="t" style="top:765.52px;font-size:13px;color:#f2c31a;font-weight:normal;letter-spacing:-0.45px;right:502.29999999999995px;margin-right:0.45px;">$ 4,719</div>
<div class="a" style="left:751px;top:762.8000000000001px;width:20.5px;height:19.7px;background:#36444f;border-radius:4px"></div><svg class="a" style="left:751px;top:762.8000000000001px" width="21" height="20" viewBox="0 0 21 20"><path d="M6 5.4 H15 M8.6 5.4 V4.3 H12.4 V5.4" fill="none" stroke="#e53935" stroke-width="1.3"/><path d="M6.6 6.8 H14.4 L13.7 15.2 Q13.6 16 12.8 16 H8.2 Q7.4 16 7.3 15.2 Z" fill="#e53935"/></svg>
<svg class="a" style="left:73.5px;top:803.0999999999999px" width="7" height="11" viewBox="0 0 7 11"><path d="M1.2 1 L5.6 5.5 L1.2 10" fill="none" stroke="#a3abb1" stroke-width="1.3"/></svg>
<div class="t" style="left:90.8px;top:800.56px;font-size:14px;font-weight:normal;color:#aab1b7;letter-spacing:-0.15px;text-decoration:underline;text-underline-offset:1.5px;text-decoration-thickness:1px">Budget</div>
<div class="a" style="left:751px;top:797.5px;width:20.5px;height:20px;background:#36444f;border-radius:4px"></div><svg class="a" style="left:751px;top:797.5px" width="21" height="20" viewBox="0 0 21 20"><path d="M10.3 5 V15 M5.3 10 H15.3" stroke="#f2c31a" stroke-width="2.6"/></svg>
<div class="a" style="left:449.4px;top:527.6px;width:131.5px;height:21px;border:1.2px solid #f2c31a;border-radius:4px"></div>
<div class="a" style="left:460.7px;top:497.7px;width:110.1px;height:26.7px;background:#050b10;border:1.3px solid #f07f1a;border-radius:4px"></div>
<div class="t" style="top:503.55px;font-size:12.2px;color:#fff;font-weight:normal;letter-spacing:-0.1px;left:466px;">Net Area: 944 sq ft</div>
<div class="a" style="left:692.9px;top:126.8px;width:26.4px;height:26.4px;border-radius:50%;background:#fff;box-shadow:2px 3px 8px rgba(0,0,0,0.18)"></div>
<svg class="a" style="left:692px;top:126px" width="28" height="28" viewBox="692 126 28 28"><path d="M709 133.7 L702.9 139.8 L709 145.8" fill="none" stroke="#67738f" stroke-width="2"/></svg></body></html>
